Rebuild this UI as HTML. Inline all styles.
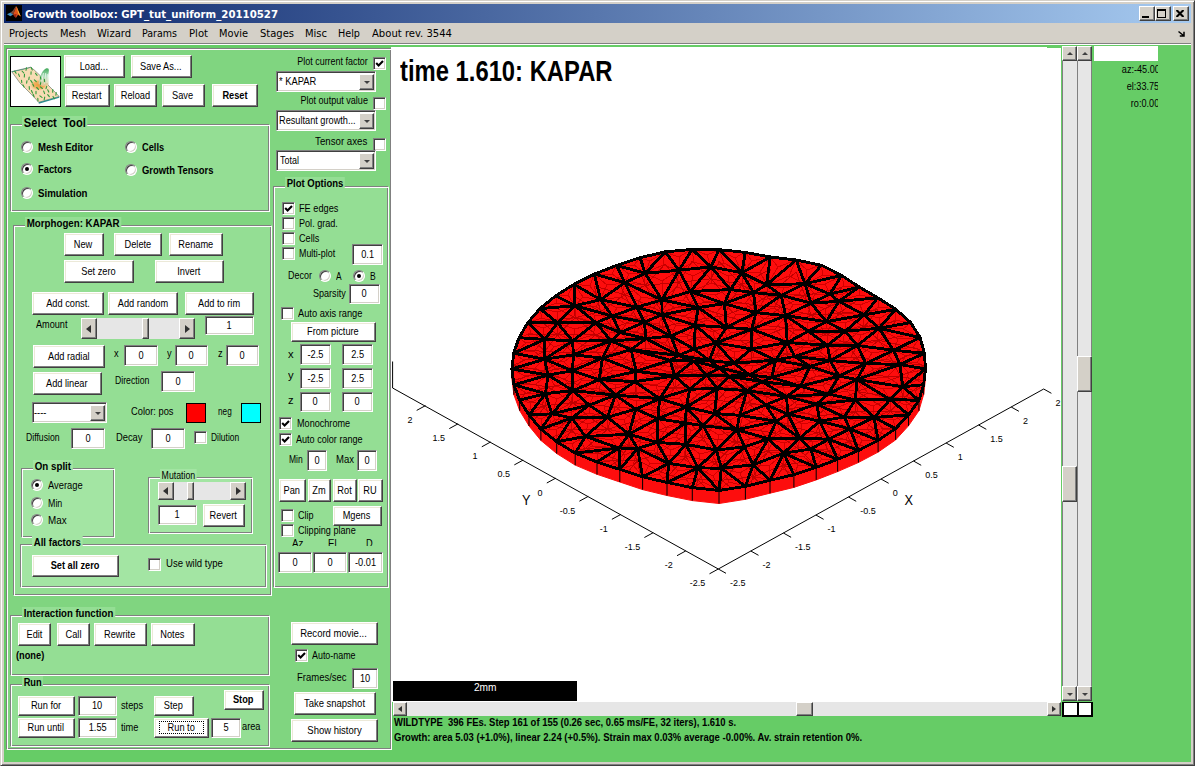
<!DOCTYPE html>
<html><head><meta charset="utf-8"><title>Growth toolbox</title>
<style>
html,body{margin:0;padding:0}
body{width:1195px;height:766px;position:relative;overflow:hidden;background:#d4d0c8;font-family:"Liberation Sans",sans-serif;font-size:11px}
body>div,body>span,body>svg{position:absolute;box-sizing:border-box}
.btn{background:#fff;border:1px solid;border-color:#fff #404040 #404040 #fff;box-shadow:inset -1px -1px 0 #808080, inset 1px 1px 0 #ece9d8}
.edit{background:#fff;border:1px solid;border-color:#808080 #fff #fff #808080;box-shadow:inset 1px 1px 0 #404040, inset -1px -1px 0 #d4d0c8}
.chk{background:#fff;border:1px solid;border-color:#808080 #fff #fff #808080;box-shadow:inset 1px 1px 0 #404040, inset -1px -1px 0 #d4d0c8}
.rad{width:12px;height:12px;border-radius:50%;background:#fff;border:1px solid;border-color:#808080 #fff #fff #808080;box-shadow:inset 1px 1px 0 #404040, inset -1px -1px 0 #d4d0c8}
.rad i{position:absolute;left:3px;top:3px;width:4px;height:4px;border-radius:50%;background:#000}
.sbtn{background:#d4d0c8;border:1px solid;border-color:#fff #404040 #404040 #fff;box-shadow:inset -1px -1px 0 #808080}
.sbtn b{position:absolute;left:50%;top:50%;width:0;height:0;border:3px solid transparent}
.sbtn b.dn{border-top:3px solid #404040;border-bottom:0;margin:-1px 0 0 -3px}
.sbtn b.up{border-bottom:3px solid #404040;border-top:0;margin:-2px 0 0 -3px}
.sbtn b.lf{border-width:4px 5px 4px 0;border-right-color:#303030;margin:-4px 0 0 -3px}
.sbtn b.rt{border-width:4px 0 4px 5px;border-left-color:#303030;margin:-4px 0 0 -2px}
.sbtn b.lf.sm{border-width:3px 4px 3px 0;margin:-3px 0 0 -2px}
.sbtn b.rt.sm{border-width:3px 0 3px 4px;margin:-3px 0 0 -2px}

</style></head><body>
<div style="left:0;top:0;width:1195px;height:766px;background:#d4d0c8;border:1px solid;border-color:#d4d0c8 #404040 #404040 #d4d0c8;box-shadow:inset 1px 1px 0 #fff, inset -1px -1px 0 #808080"></div>
<div style="left:4px;top:4px;width:1187px;height:19px;background:linear-gradient(90deg,#0a246a 0%,#a6caf0 100%)"></div>
<svg style="left:6px;top:5px" width="16" height="16" viewBox="0 0 16 16"><rect width="16" height="16" fill="#000"/>
<path d="M1 9.2 L4.600 7.6 L7.2 9.6 L4.4 11.2 Z" fill="#3f8fc0"/><path d="M4.600 7.600 L7 5.500 L9.6 1.500 L10.5 1.200 L8.5 6 L7.2 9.600 Z" fill="#7a4a3a"/><path d="M10.5 1.200 L11.8 4.500 L14.8 11.500 L12 9.800 L10 12.800 L8.600 11.500 L7.2 9.600 L8.500 6 Z" fill="#e0521a"/><path d="M10.5 1.200 L11.800 4.500 L14.800 11.500 L12.200 8.500 Z" fill="#f6b93a"/><path d="M7.2 9.600 L8.600 11.500 L10 12.800 L10.600 9 Z" fill="#9c2618"/></svg>
<span style="left:25.00px;top:6.80px;line-height:15px;font:bold 11px 'DejaVu Sans Condensed','DejaVu Sans',sans-serif;line-height:15px;transform:scaleX(1.0288);transform-origin:0 50%;color:#fff;white-space:pre">Growth toolbox: GPT_tut_uniform_20110527</span>
<div class="sbtn" style="left:1139px;top:6px;width:16px;height:15px"></div>
<div class="sbtn" style="left:1155px;top:6px;width:16px;height:15px"></div>
<div class="sbtn" style="left:1173px;top:6px;width:16px;height:15px"></div>
<div style="left:1142px;top:16px;width:7px;height:2px;background:#000"></div>
<div style="left:1157px;top:9px;width:9px;height:9px;border:1px solid #000;border-top-width:2px"></div>
<svg style="left:1176px;top:9.5px" width="8" height="7" viewBox="0 0 8 7"><path d="M0.500 0 L7.500 7 M7.500 0 L0.500 7" stroke="#000" stroke-width="2.1"/></svg>
<span style="left:9.00px;top:25.80px;line-height:15px;font:11px 'DejaVu Sans Condensed','DejaVu Sans',sans-serif;line-height:15px;transform:scaleX(1.0008);transform-origin:0 50%;color:#000;white-space:pre">Projects</span>
<span style="left:60.00px;top:25.80px;line-height:15px;font:11px 'DejaVu Sans Condensed','DejaVu Sans',sans-serif;line-height:15px;transform:scaleX(0.9976);transform-origin:0 50%;color:#000;white-space:pre">Mesh</span>
<span style="left:97.00px;top:25.80px;line-height:15px;font:11px 'DejaVu Sans Condensed','DejaVu Sans',sans-serif;line-height:15px;transform:scaleX(1.0083);transform-origin:0 50%;color:#000;white-space:pre">Wizard</span>
<span style="left:142.00px;top:25.80px;line-height:15px;font:11px 'DejaVu Sans Condensed','DejaVu Sans',sans-serif;line-height:15px;transform:scaleX(0.9597);transform-origin:0 50%;color:#000;white-space:pre">Params</span>
<span style="left:189.00px;top:25.80px;line-height:15px;font:11px 'DejaVu Sans Condensed','DejaVu Sans',sans-serif;line-height:15px;transform:scaleX(1.0184);transform-origin:0 50%;color:#000;white-space:pre">Plot</span>
<span style="left:219.00px;top:25.80px;line-height:15px;font:11px 'DejaVu Sans Condensed','DejaVu Sans',sans-serif;line-height:15px;transform:scaleX(0.9899);transform-origin:0 50%;color:#000;white-space:pre">Movie</span>
<span style="left:260.00px;top:25.80px;line-height:15px;font:11px 'DejaVu Sans Condensed','DejaVu Sans',sans-serif;line-height:15px;transform:scaleX(1.0069);transform-origin:0 50%;color:#000;white-space:pre">Stages</span>
<span style="left:305.00px;top:25.80px;line-height:15px;font:11px 'DejaVu Sans Condensed','DejaVu Sans',sans-serif;line-height:15px;transform:scaleX(1.0050);transform-origin:0 50%;color:#000;white-space:pre">Misc</span>
<span style="left:338.00px;top:25.80px;line-height:15px;font:11px 'DejaVu Sans Condensed','DejaVu Sans',sans-serif;line-height:15px;transform:scaleX(0.9744);transform-origin:0 50%;color:#000;white-space:pre">Help</span>
<span style="left:372.00px;top:25.80px;line-height:15px;font:11px 'DejaVu Sans Condensed','DejaVu Sans',sans-serif;line-height:15px;transform:scaleX(1.0155);transform-origin:0 50%;color:#000;white-space:pre">About rev. 3544</span>
<svg style="left:1177px;top:29px" width="9" height="9" viewBox="0 0 9 9"><path d="M1.500 2.500 L6.500 6.500 M7 2.800 V7 H2.800" stroke="#000" stroke-width="1.5" fill="none"/></svg>
<div style="left:4px;top:43px;width:1187px;height:1px;background:#808080"></div>
<div style="left:4px;top:44px;width:1187px;height:1px;background:#fff"></div>
<div style="left:4px;top:45px;width:1187px;height:717px;background:#66cc66"></div>
<div style="left:6px;top:48px;width:386px;height:702px;background:#80d580"></div>
<div style="left:6px;top:48px;width:385px;height:701px;border:1px solid #808080"></div>
<div style="left:7px;top:49px;width:385px;height:701px;border:1px solid #fff"></div>
<svg style="left:10px;top:56px" width="51" height="51" viewBox="0 0 51 51"><rect x="0.5" y="0.5" width="50" height="50" fill="#fff" stroke="#000"/>
<defs><radialGradient id="og"><stop offset="0" stop-color="#ee9a3a"/><stop offset="0.6" stop-color="#f0a850" stop-opacity="0.8"/><stop offset="1" stop-color="#f4c890" stop-opacity="0"/></radialGradient>
<linearGradient id="pg" x1="0" y1="0" x2="0" y2="1"><stop offset="0" stop-color="#3fa858"/><stop offset="0.45" stop-color="#a8dcb8"/><stop offset="1" stop-color="#e8c898"/></linearGradient></defs>
<path d="M1.7 15.600 L20.700 11.200 C26 15 29 19 33 22 L38 29 C42 33 46 37 49.200 40.500 L28.700 46.300 C25 42 22 39 19 36 C16 33 13 30 10 27 Z" fill="#f7dcb4" stroke="#5a6a5a" stroke-width="0.6"/>
<path d="M28.700 46.300 L49.200 40.500 L49.300 41.800 L28.800 47.700 Z" fill="#2a8c8c"/>
<path d="M1.7 15.600 L20.700 11.200 L20.800 11.800 L2 16.300 Z" fill="#3a8a7a"/>
<ellipse cx="29" cy="29" rx="9.500" ry="6" fill="url(#og)"/>
<path d="M28.500 28 C29.500 20 32.500 13.500 36.500 12.200 C39.800 11.600 39 15 38.200 19 L38.500 28.500 C35 30.500 31 30.200 28.500 28 Z" fill="url(#pg)"/>
<path d="M31.500 27 L33.500 17 M34.500 27.500 L35.700 17 M37 27 L37.300 18" stroke="#fff" stroke-width="0.9" opacity="0.75" fill="none"/>
<path d="M12.9 28.8L14.1 31.1M19.2 30.6L19.4 33.2M14.5 18.4L14.3 21.0M29.9 39.9L32.0 41.4M26.0 35.2L26.0 37.8M36.7 30.3L36.0 32.7M16.5 11.7L16.0 14.3M34.7 41.1L34.2 43.7M8.5 18.0L9.5 20.4M30.3 20.7L30.8 23.2M24.4 23.8L26.3 25.6M21.1 15.7L21.0 18.3M11.5 24.2L11.8 26.8M22.7 28.0L23.8 30.3M30.3 30.9L32.4 32.5M26.7 31.5L28.5 33.4M21.4 34.6L22.5 36.9M30.9 26.1L30.3 28.7M33.7 35.1L34.6 37.6M19.2 21.0L18.8 23.6M12.0 15.0L13.8 17.0M25.5 17.3L27.1 19.3M37.7 38.6L39.3 40.7M20.7 24.4L22.2 26.6M42.8 33.6L42.7 36.2M43.0 40.4L44.3 42.7M4.7 15.1L6.1 17.3M34.4 23.3L34.6 25.8M23.1 38.3L24.1 40.7M17.0 24.7L16.6 27.2M27.8 42.4L28.0 44.9M46.2 36.6L45.9 39.2M21.2 11.6L22.3 14.0M37.7 33.8L38.8 36.1" stroke="#2f9a3a" stroke-width="1.1" stroke-linecap="round" fill="none"/></svg>
<div class="btn" style="left:64px;top:55px;width:61px;height:23px"></div>
<span style="left:77.18px;top:58.50px;line-height:15px;font:11px 'Liberation Sans',sans-serif;line-height:15px;transform:scaleX(0.8400);transform-origin:50% 50%;color:#000;white-space:pre">Load...</span>
<div class="btn" style="left:131px;top:55px;width:61px;height:23px"></div>
<span style="left:136.23px;top:58.50px;line-height:15px;font:11px 'Liberation Sans',sans-serif;line-height:15px;transform:scaleX(0.8400);transform-origin:50% 50%;color:#000;white-space:pre">Save As...</span>
<div class="btn" style="left:65px;top:84px;width:45px;height:23px"></div>
<span style="left:69.27px;top:87.50px;line-height:15px;font:11px 'Liberation Sans',sans-serif;line-height:15px;transform:scaleX(0.8400);transform-origin:50% 50%;color:#000;white-space:pre">Restart</span>
<div class="btn" style="left:114px;top:84px;width:43px;height:23px"></div>
<span style="left:117.57px;top:87.50px;line-height:15px;font:11px 'Liberation Sans',sans-serif;line-height:15px;transform:scaleX(0.8400);transform-origin:50% 50%;color:#000;white-space:pre">Reload</span>
<div class="btn" style="left:162px;top:84px;width:43px;height:23px"></div>
<span style="left:170.46px;top:87.50px;line-height:15px;font:11px 'Liberation Sans',sans-serif;line-height:15px;transform:scaleX(0.8400);transform-origin:50% 50%;color:#000;white-space:pre">Save</span>
<div class="btn" style="left:212px;top:84px;width:46px;height:23px"></div>
<span style="left:219.52px;top:87.50px;line-height:15px;font:bold 11px 'Liberation Sans',sans-serif;line-height:15px;transform:scaleX(0.8400);transform-origin:50% 50%;color:#000;white-space:pre">Reset</span>
<div style="left:10px;top:124px;width:260px;height:88px;background:#94de94"></div>
<div style="left:10px;top:124px;width:259px;height:87px;border:1px solid #808080"></div>
<div style="left:11px;top:125px;width:259px;height:87px;border:1px solid #fff"></div>
<span style="left:24.00px;top:115.50px;line-height:14px;font:bold 12px 'Liberation Sans',sans-serif;line-height:14px;transform:scaleX(0.9328);transform-origin:0 50%;color:#000;white-space:pre;background:#94de94;padding:0 2px;margin-left:-2px">Select  Tool</span>
<div class="rad" style="left:21px;top:141px"></div>
<span style="left:37.90px;top:139.50px;line-height:15px;font:bold 11px 'Liberation Sans',sans-serif;line-height:15px;transform:scaleX(0.8721);transform-origin:0 50%;color:#000;white-space:pre">Mesh Editor</span>
<div class="rad" style="left:21px;top:163px"><i></i></div>
<span style="left:37.90px;top:161.50px;line-height:15px;font:bold 11px 'Liberation Sans',sans-serif;line-height:15px;transform:scaleX(0.8503);transform-origin:0 50%;color:#000;white-space:pre">Factors</span>
<div class="rad" style="left:21px;top:187px"></div>
<span style="left:37.90px;top:185.50px;line-height:15px;font:bold 11px 'Liberation Sans',sans-serif;line-height:15px;transform:scaleX(0.8802);transform-origin:0 50%;color:#000;white-space:pre">Simulation</span>
<div class="rad" style="left:125px;top:141px"></div>
<span style="left:142.00px;top:139.50px;line-height:15px;font:bold 11px 'Liberation Sans',sans-serif;line-height:15px;transform:scaleX(0.8400);transform-origin:0 50%;color:#000;white-space:pre">Cells</span>
<div class="rad" style="left:125px;top:164px"></div>
<span style="left:142.00px;top:162.50px;line-height:15px;font:bold 11px 'Liberation Sans',sans-serif;line-height:15px;transform:scaleX(0.8560);transform-origin:0 50%;color:#000;white-space:pre">Growth Tensors</span>
<div style="left:13px;top:225px;width:259px;height:371px;background:#94de94"></div>
<div style="left:13px;top:225px;width:258px;height:370px;border:1px solid #808080"></div>
<div style="left:14px;top:226px;width:258px;height:370px;border:1px solid #fff"></div>
<span style="left:27.30px;top:216.50px;line-height:13px;font:bold 11px 'Liberation Sans',sans-serif;line-height:13px;transform:scaleX(0.8836);transform-origin:0 50%;color:#000;white-space:pre;background:#94de94;padding:0 2px;margin-left:-2px">Morphogen: KAPAR</span>
<div class="btn" style="left:64px;top:233px;width:40px;height:23px"></div>
<span style="left:72.49px;top:236.50px;line-height:15px;font:11px 'Liberation Sans',sans-serif;line-height:15px;transform:scaleX(0.8400);transform-origin:50% 50%;color:#000;white-space:pre">New</span>
<div class="btn" style="left:114px;top:233px;width:48px;height:23px"></div>
<span style="left:121.60px;top:236.50px;line-height:15px;font:11px 'Liberation Sans',sans-serif;line-height:15px;transform:scaleX(0.8400);transform-origin:50% 50%;color:#000;white-space:pre">Delete</span>
<div class="btn" style="left:169px;top:233px;width:54px;height:23px"></div>
<span style="left:174.71px;top:236.50px;line-height:15px;font:11px 'Liberation Sans',sans-serif;line-height:15px;transform:scaleX(0.8400);transform-origin:50% 50%;color:#000;white-space:pre">Rename</span>
<div class="btn" style="left:64px;top:260px;width:70px;height:23px"></div>
<span style="left:78.02px;top:263.50px;line-height:15px;font:11px 'Liberation Sans',sans-serif;line-height:15px;transform:scaleX(0.8400);transform-origin:50% 50%;color:#000;white-space:pre">Set zero</span>
<div class="btn" style="left:155px;top:260px;width:69px;height:23px"></div>
<span style="left:175.24px;top:263.50px;line-height:15px;font:11px 'Liberation Sans',sans-serif;line-height:15px;transform:scaleX(0.8400);transform-origin:50% 50%;color:#000;white-space:pre">Invert</span>
<div class="btn" style="left:32px;top:292px;width:72px;height:23px"></div>
<span style="left:41.51px;top:295.50px;line-height:15px;font:11px 'Liberation Sans',sans-serif;line-height:15px;transform:scaleX(0.8400);transform-origin:50% 50%;color:#000;white-space:pre">Add const.</span>
<div class="btn" style="left:108px;top:292px;width:70px;height:23px"></div>
<span style="left:112.53px;top:295.50px;line-height:15px;font:11px 'Liberation Sans',sans-serif;line-height:15px;transform:scaleX(0.8400);transform-origin:50% 50%;color:#000;white-space:pre">Add random</span>
<div class="btn" style="left:185px;top:292px;width:69px;height:23px"></div>
<span style="left:193.93px;top:295.50px;line-height:15px;font:11px 'Liberation Sans',sans-serif;line-height:15px;transform:scaleX(0.8400);transform-origin:50% 50%;color:#000;white-space:pre">Add to rim</span>
<span style="left:36.00px;top:317.00px;line-height:15px;font:11px 'Liberation Sans',sans-serif;line-height:15px;transform:scaleX(0.8307);transform-origin:0 50%;color:#000;white-space:pre">Amount</span>
<div style="left:81px;top:318px;width:114px;height:21px;background:#e6e6e6"></div>
<div class="sbtn" style="left:81px;top:318px;width:16px;height:21px"><b class="lf"></b></div>
<div class="sbtn" style="left:179px;top:318px;width:16px;height:21px"><b class="rt"></b></div>
<div class="sbtn" style="left:142px;top:318px;width:7px;height:21px"></div>
<div class="edit" style="left:205px;top:316px;width:49px;height:19px"></div>
<span style="left:226.44px;top:317.70px;line-height:15px;font:11px 'Liberation Sans',sans-serif;line-height:15px;transform:scaleX(0.8400);transform-origin:50% 50%;color:#000;white-space:pre">1</span>
<div class="btn" style="left:33px;top:345px;width:72px;height:23px"></div>
<span style="left:43.73px;top:348.50px;line-height:15px;font:11px 'Liberation Sans',sans-serif;line-height:15px;transform:scaleX(0.8400);transform-origin:50% 50%;color:#000;white-space:pre">Add radial</span>
<span style="left:114.00px;top:346.00px;line-height:15px;font:11px 'Liberation Sans',sans-serif;line-height:15px;transform:scaleX(0.8400);transform-origin:0 50%;color:#000;white-space:pre">x</span>
<div class="edit" style="left:124px;top:345px;width:34px;height:21px"></div>
<span style="left:137.94px;top:347.70px;line-height:15px;font:11px 'Liberation Sans',sans-serif;line-height:15px;transform:scaleX(0.8400);transform-origin:50% 50%;color:#000;white-space:pre">0</span>
<span style="left:166.50px;top:346.00px;line-height:15px;font:11px 'Liberation Sans',sans-serif;line-height:15px;transform:scaleX(0.8400);transform-origin:0 50%;color:#000;white-space:pre">y</span>
<div class="edit" style="left:175px;top:345px;width:33px;height:21px"></div>
<span style="left:188.44px;top:347.70px;line-height:15px;font:11px 'Liberation Sans',sans-serif;line-height:15px;transform:scaleX(0.8400);transform-origin:50% 50%;color:#000;white-space:pre">0</span>
<span style="left:217.50px;top:346.00px;line-height:15px;font:11px 'Liberation Sans',sans-serif;line-height:15px;transform:scaleX(0.8400);transform-origin:0 50%;color:#000;white-space:pre">z</span>
<div class="edit" style="left:226px;top:345px;width:33px;height:21px"></div>
<span style="left:239.44px;top:347.70px;line-height:15px;font:11px 'Liberation Sans',sans-serif;line-height:15px;transform:scaleX(0.8400);transform-origin:50% 50%;color:#000;white-space:pre">0</span>
<div class="btn" style="left:33px;top:372px;width:69px;height:23px"></div>
<span style="left:42.23px;top:375.50px;line-height:15px;font:11px 'Liberation Sans',sans-serif;line-height:15px;transform:scaleX(0.8400);transform-origin:50% 50%;color:#000;white-space:pre">Add linear</span>
<span style="left:115.00px;top:373.00px;line-height:15px;font:11px 'Liberation Sans',sans-serif;line-height:15px;transform:scaleX(0.7902);transform-origin:0 50%;color:#000;white-space:pre">Direction</span>
<div class="edit" style="left:161px;top:371px;width:34px;height:21px"></div>
<span style="left:174.94px;top:373.70px;line-height:15px;font:11px 'Liberation Sans',sans-serif;line-height:15px;transform:scaleX(0.8400);transform-origin:50% 50%;color:#000;white-space:pre">0</span>
<div class="edit" style="left:32px;top:402px;width:75px;height:21px"></div>
<div class="sbtn" style="left:90px;top:405px;width:15px;height:16px"><b class="dn"></b></div>
<span style="left:34.00px;top:405.00px;line-height:15px;font:11px 'Liberation Sans',sans-serif;line-height:15px;transform:scaleX(0.8400);transform-origin:0 50%;color:#000;white-space:pre">----</span>
<span style="left:131.20px;top:404.00px;line-height:15px;font:11px 'Liberation Sans',sans-serif;line-height:15px;transform:scaleX(0.8476);transform-origin:0 50%;color:#000;white-space:pre">Color: pos</span>
<div style="left:186px;top:403px;width:20px;height:20px;background:#ff0000;border:1px solid #000"></div>
<span style="left:218.30px;top:404.00px;line-height:15px;font:11px 'Liberation Sans',sans-serif;line-height:15px;transform:scaleX(0.7462);transform-origin:0 50%;color:#000;white-space:pre">neg</span>
<div style="left:241px;top:403px;width:20px;height:20px;background:#00ffff;border:1px solid #000"></div>
<span style="left:25.80px;top:429.50px;line-height:15px;font:11px 'Liberation Sans',sans-serif;line-height:15px;transform:scaleX(0.7886);transform-origin:0 50%;color:#000;white-space:pre">Diffusion</span>
<div class="edit" style="left:71px;top:428px;width:34px;height:21px"></div>
<span style="left:84.94px;top:430.70px;line-height:15px;font:11px 'Liberation Sans',sans-serif;line-height:15px;transform:scaleX(0.8400);transform-origin:50% 50%;color:#000;white-space:pre">0</span>
<span style="left:115.70px;top:429.50px;line-height:15px;font:11px 'Liberation Sans',sans-serif;line-height:15px;transform:scaleX(0.8497);transform-origin:0 50%;color:#000;white-space:pre">Decay</span>
<div class="edit" style="left:151px;top:428px;width:34px;height:21px"></div>
<span style="left:164.94px;top:430.70px;line-height:15px;font:11px 'Liberation Sans',sans-serif;line-height:15px;transform:scaleX(0.8400);transform-origin:50% 50%;color:#000;white-space:pre">0</span>
<div class="chk" style="left:194px;top:431px;width:13px;height:13px"></div>
<span style="left:211.00px;top:429.50px;line-height:15px;font:11px 'Liberation Sans',sans-serif;line-height:15px;transform:scaleX(0.7687);transform-origin:0 50%;color:#000;white-space:pre">Dilution</span>
<div style="left:21px;top:468px;width:94px;height:70px;background:#a3e5a3"></div>
<div style="left:21px;top:468px;width:93px;height:69px;border:1px solid #808080"></div>
<div style="left:22px;top:469px;width:93px;height:69px;border:1px solid #fff"></div>
<span style="left:35.00px;top:460.00px;line-height:13px;font:bold 11px 'Liberation Sans',sans-serif;line-height:13px;transform:scaleX(0.8864);transform-origin:0 50%;color:#000;white-space:pre;background:#a3e5a3;padding:0 2px;margin-left:-2px">On split</span>
<div class="rad" style="left:31px;top:479px"><i></i></div>
<span style="left:48.00px;top:477.50px;line-height:15px;font:11px 'Liberation Sans',sans-serif;line-height:15px;transform:scaleX(0.8509);transform-origin:0 50%;color:#000;white-space:pre">Average</span>
<div class="rad" style="left:31px;top:497px"></div>
<span style="left:48.00px;top:495.50px;line-height:15px;font:11px 'Liberation Sans',sans-serif;line-height:15px;transform:scaleX(0.8063);transform-origin:0 50%;color:#000;white-space:pre">Min</span>
<div class="rad" style="left:31px;top:514px"></div>
<span style="left:48.00px;top:512.50px;line-height:15px;font:11px 'Liberation Sans',sans-serif;line-height:15px;transform:scaleX(0.8950);transform-origin:0 50%;color:#000;white-space:pre">Max</span>
<div style="left:148px;top:477px;width:105px;height:57px;background:#a3e5a3"></div>
<div style="left:148px;top:477px;width:104px;height:56px;border:1px solid #808080"></div>
<div style="left:149px;top:478px;width:104px;height:56px;border:1px solid #fff"></div>
<span style="left:162.30px;top:468.50px;line-height:13px;font:11px 'Liberation Sans',sans-serif;line-height:13px;transform:scaleX(0.7961);transform-origin:0 50%;color:#000;white-space:pre;background:#a3e5a3;padding:0 2px;margin-left:-2px">Mutation</span>
<div style="left:158px;top:482px;width:88px;height:18px;background:#e6e6e6"></div>
<div class="sbtn" style="left:158px;top:482px;width:16px;height:18px"><b class="lf"></b></div>
<div class="sbtn" style="left:230px;top:482px;width:16px;height:18px"><b class="rt"></b></div>
<div class="sbtn" style="left:187px;top:482px;width:7px;height:18px"></div>
<div class="edit" style="left:158px;top:505px;width:39px;height:20px"></div>
<span style="left:174.44px;top:507.20px;line-height:15px;font:11px 'Liberation Sans',sans-serif;line-height:15px;transform:scaleX(0.8400);transform-origin:50% 50%;color:#000;white-space:pre">1</span>
<div class="btn" style="left:203px;top:504px;width:42px;height:23px"></div>
<span style="left:207.30px;top:507.50px;line-height:15px;font:11px 'Liberation Sans',sans-serif;line-height:15px;transform:scaleX(0.8400);transform-origin:50% 50%;color:#000;white-space:pre">Revert</span>
<div style="left:20px;top:544px;width:247px;height:44px;background:#a3e5a3"></div>
<div style="left:20px;top:544px;width:246px;height:43px;border:1px solid #808080"></div>
<div style="left:21px;top:545px;width:246px;height:43px;border:1px solid #fff"></div>
<span style="left:34.00px;top:536.00px;line-height:13px;font:bold 11px 'Liberation Sans',sans-serif;line-height:13px;transform:scaleX(0.8737);transform-origin:0 50%;color:#000;white-space:pre;background:#a3e5a3;padding:0 2px;margin-left:-2px">All factors</span>
<div class="btn" style="left:32px;top:555px;width:87px;height:22px"></div>
<span style="left:45.96px;top:558.00px;line-height:15px;font:bold 11px 'Liberation Sans',sans-serif;line-height:15px;transform:scaleX(0.8400);transform-origin:50% 50%;color:#000;white-space:pre">Set all zero</span>
<div class="chk" style="left:148px;top:558px;width:13px;height:13px"></div>
<span style="left:165.70px;top:556.00px;line-height:15px;font:11px 'Liberation Sans',sans-serif;line-height:15px;transform:scaleX(0.8697);transform-origin:0 50%;color:#000;white-space:pre">Use wild type</span>
<div style="left:10px;top:615px;width:260px;height:61px;background:#94de94"></div>
<div style="left:10px;top:615px;width:259px;height:60px;border:1px solid #808080"></div>
<div style="left:11px;top:616px;width:259px;height:60px;border:1px solid #fff"></div>
<span style="left:24.00px;top:607.00px;line-height:13px;font:bold 11px 'Liberation Sans',sans-serif;line-height:13px;transform:scaleX(0.8717);transform-origin:0 50%;color:#000;white-space:pre;background:#94de94;padding:0 2px;margin-left:-2px">Interaction function</span>
<div class="btn" style="left:18px;top:623px;width:33px;height:23px"></div>
<span style="left:24.52px;top:626.50px;line-height:15px;font:11px 'Liberation Sans',sans-serif;line-height:15px;transform:scaleX(0.8400);transform-origin:50% 50%;color:#000;white-space:pre">Edit</span>
<div class="btn" style="left:57px;top:623px;width:33px;height:23px"></div>
<span style="left:63.52px;top:626.50px;line-height:15px;font:11px 'Liberation Sans',sans-serif;line-height:15px;transform:scaleX(0.8400);transform-origin:50% 50%;color:#000;white-space:pre">Call</span>
<div class="btn" style="left:94px;top:623px;width:53px;height:23px"></div>
<span style="left:101.35px;top:626.50px;line-height:15px;font:11px 'Liberation Sans',sans-serif;line-height:15px;transform:scaleX(0.8400);transform-origin:50% 50%;color:#000;white-space:pre">Rewrite</span>
<div class="btn" style="left:151px;top:623px;width:44px;height:23px"></div>
<span style="left:158.12px;top:626.50px;line-height:15px;font:11px 'Liberation Sans',sans-serif;line-height:15px;transform:scaleX(0.8400);transform-origin:50% 50%;color:#000;white-space:pre">Notes</span>
<span style="left:16.00px;top:648.00px;line-height:15px;font:bold 11px 'Liberation Sans',sans-serif;line-height:15px;transform:scaleX(0.8400);transform-origin:0 50%;color:#000;white-space:pre">(none)</span>
<div style="left:10px;top:684px;width:260px;height:63px;background:#94de94"></div>
<div style="left:10px;top:684px;width:259px;height:62px;border:1px solid #808080"></div>
<div style="left:11px;top:685px;width:259px;height:62px;border:1px solid #fff"></div>
<span style="left:23.50px;top:676.00px;line-height:13px;font:bold 11px 'Liberation Sans',sans-serif;line-height:13px;transform:scaleX(0.8415);transform-origin:0 50%;color:#000;white-space:pre;background:#94de94;padding:0 2px;margin-left:-2px">Run</span>
<div class="btn" style="left:18px;top:696px;width:57px;height:20px"></div>
<span style="left:27.96px;top:698.00px;line-height:15px;font:11px 'Liberation Sans',sans-serif;line-height:15px;transform:scaleX(0.8400);transform-origin:50% 50%;color:#000;white-space:pre">Run for</span>
<div class="edit" style="left:78px;top:696px;width:39px;height:20px"></div>
<span style="left:91.38px;top:698.20px;line-height:15px;font:11px 'Liberation Sans',sans-serif;line-height:15px;transform:scaleX(0.8400);transform-origin:50% 50%;color:#000;white-space:pre">10</span>
<span style="left:121.00px;top:698.00px;line-height:15px;font:11px 'Liberation Sans',sans-serif;line-height:15px;transform:scaleX(0.8400);transform-origin:0 50%;color:#000;white-space:pre">steps</span>
<div class="btn" style="left:154px;top:696px;width:40px;height:20px"></div>
<span style="left:162.18px;top:698.00px;line-height:15px;font:11px 'Liberation Sans',sans-serif;line-height:15px;transform:scaleX(0.8400);transform-origin:50% 50%;color:#000;white-space:pre">Step</span>
<div class="btn" style="left:224px;top:690px;width:40px;height:20px"></div>
<span style="left:231.27px;top:692.00px;line-height:15px;font:bold 11px 'Liberation Sans',sans-serif;line-height:15px;transform:scaleX(0.8400);transform-origin:50% 50%;color:#000;white-space:pre">Stop</span>
<div class="btn" style="left:18px;top:718px;width:57px;height:20px"></div>
<span style="left:24.29px;top:720.00px;line-height:15px;font:11px 'Liberation Sans',sans-serif;line-height:15px;transform:scaleX(0.8400);transform-origin:50% 50%;color:#000;white-space:pre">Run until</span>
<div class="edit" style="left:78px;top:718px;width:39px;height:20px"></div>
<span style="left:86.79px;top:720.20px;line-height:15px;font:11px 'Liberation Sans',sans-serif;line-height:15px;transform:scaleX(0.8400);transform-origin:50% 50%;color:#000;white-space:pre">1.55</span>
<span style="left:121.00px;top:720.00px;line-height:15px;font:11px 'Liberation Sans',sans-serif;line-height:15px;transform:scaleX(0.8400);transform-origin:0 50%;color:#000;white-space:pre">time</span>
<div class="btn" style="left:154px;top:718px;width:55px;height:20px"></div>
<div style="left:159px;top:721px;width:45px;height:13px;border:1px dotted #000"></div>
<span style="left:164.79px;top:720.00px;line-height:15px;font:11px 'Liberation Sans',sans-serif;line-height:15px;transform:scaleX(0.8400);transform-origin:50% 50%;color:#000;white-space:pre">Run to</span>
<div class="edit" style="left:211px;top:718px;width:30px;height:20px"></div>
<span style="left:222.94px;top:720.20px;line-height:15px;font:11px 'Liberation Sans',sans-serif;line-height:15px;transform:scaleX(0.8400);transform-origin:50% 50%;color:#000;white-space:pre">5</span>
<span style="left:242.00px;top:718.50px;line-height:15px;font:11px 'Liberation Sans',sans-serif;line-height:15px;transform:scaleX(0.8400);transform-origin:0 50%;color:#000;white-space:pre">area</span>
<span style="left:280.87px;top:53.60px;line-height:15px;font:11px 'Liberation Sans',sans-serif;line-height:15px;transform:scaleX(0.8119);transform-origin:100% 50%;color:#000;white-space:pre">Plot current factor</span>
<div class="chk" style="left:373px;top:57px;width:13px;height:13px"><svg width="13" height="13" viewBox="0 0 13 13" style="position:absolute;left:-1px;top:-1px"><path d="M3.2 6 L5.6 8.4 L10 4" stroke="#000" stroke-width="2.1" fill="none"/></svg></div>
<div class="edit" style="left:276px;top:71px;width:100px;height:21px"></div>
<div class="sbtn" style="left:359px;top:74px;width:15px;height:16px"><b class="dn"></b></div>
<span style="left:279.40px;top:73.60px;line-height:15px;font:11px 'Liberation Sans',sans-serif;line-height:15px;transform:scaleX(0.8491);transform-origin:0 50%;color:#000;white-space:pre">* KAPAR</span>
<span style="left:285.75px;top:93.00px;line-height:15px;font:11px 'Liberation Sans',sans-serif;line-height:15px;transform:scaleX(0.8236);transform-origin:100% 50%;color:#000;white-space:pre">Plot output value</span>
<div class="chk" style="left:373px;top:97px;width:13px;height:13px"></div>
<div class="edit" style="left:276px;top:110px;width:100px;height:21px"></div>
<div class="sbtn" style="left:359px;top:113px;width:15px;height:16px"><b class="dn"></b></div>
<span style="left:279.40px;top:113.00px;line-height:15px;font:11px 'Liberation Sans',sans-serif;line-height:15px;transform:scaleX(0.8352);transform-origin:0 50%;color:#000;white-space:pre">Resultant growth...</span>
<span style="left:308.39px;top:133.60px;line-height:15px;font:11px 'Liberation Sans',sans-serif;line-height:15px;transform:scaleX(0.8801);transform-origin:100% 50%;color:#000;white-space:pre">Tensor axes</span>
<div class="chk" style="left:373px;top:138px;width:13px;height:13px"></div>
<div class="edit" style="left:276px;top:150px;width:100px;height:21px"></div>
<div class="sbtn" style="left:359px;top:153px;width:15px;height:16px"><b class="dn"></b></div>
<span style="left:280.00px;top:152.70px;line-height:15px;font:11px 'Liberation Sans',sans-serif;line-height:15px;transform:scaleX(0.8172);transform-origin:0 50%;color:#000;white-space:pre">Total</span>
<div style="left:273px;top:186px;width:116px;height:402px;background:#94de94"></div>
<div style="left:273px;top:186px;width:115px;height:401px;border:1px solid #808080"></div>
<div style="left:274px;top:187px;width:115px;height:401px;border:1px solid #fff"></div>
<span style="left:287.20px;top:176.50px;line-height:13px;font:bold 11px 'Liberation Sans',sans-serif;line-height:13px;transform:scaleX(0.8656);transform-origin:0 50%;color:#000;white-space:pre;background:#94de94;padding:0 2px;margin-left:-2px">Plot Options</span>
<div class="chk" style="left:282px;top:202px;width:13px;height:13px"><svg width="13" height="13" viewBox="0 0 13 13" style="position:absolute;left:-1px;top:-1px"><path d="M3.2 6 L5.6 8.4 L10 4" stroke="#000" stroke-width="2.1" fill="none"/></svg></div>
<span style="left:299.40px;top:200.80px;line-height:15px;font:11px 'Liberation Sans',sans-serif;line-height:15px;transform:scaleX(0.8366);transform-origin:0 50%;color:#000;white-space:pre">FE edges</span>
<div class="chk" style="left:282px;top:217px;width:13px;height:13px"></div>
<span style="left:299.40px;top:215.80px;line-height:15px;font:11px 'Liberation Sans',sans-serif;line-height:15px;transform:scaleX(0.8260);transform-origin:0 50%;color:#000;white-space:pre">Pol. grad.</span>
<div class="chk" style="left:282px;top:232px;width:13px;height:13px"></div>
<span style="left:299.40px;top:230.80px;line-height:15px;font:11px 'Liberation Sans',sans-serif;line-height:15px;transform:scaleX(0.8302);transform-origin:0 50%;color:#000;white-space:pre">Cells</span>
<div class="chk" style="left:282px;top:247px;width:13px;height:13px"></div>
<span style="left:299.40px;top:245.80px;line-height:15px;font:11px 'Liberation Sans',sans-serif;line-height:15px;transform:scaleX(0.8090);transform-origin:0 50%;color:#000;white-space:pre">Multi-plot</span>
<div class="edit" style="left:352px;top:244px;width:31px;height:21px"></div>
<span style="left:359.85px;top:246.70px;line-height:15px;font:11px 'Liberation Sans',sans-serif;line-height:15px;transform:scaleX(0.8400);transform-origin:50% 50%;color:#000;white-space:pre">0.1</span>
<span style="left:288.30px;top:268.00px;line-height:15px;font:11px 'Liberation Sans',sans-serif;line-height:15px;transform:scaleX(0.8145);transform-origin:0 50%;color:#000;white-space:pre">Decor</span>
<div class="rad" style="left:319.2px;top:269.8px"></div>
<span style="left:336.00px;top:268.50px;line-height:15px;font:11px 'Liberation Sans',sans-serif;line-height:15px;transform:scaleX(0.7626);transform-origin:0 50%;color:#000;white-space:pre">A</span>
<div class="rad" style="left:353.1px;top:269.8px"><i></i></div>
<span style="left:370.00px;top:268.50px;line-height:15px;font:11px 'Liberation Sans',sans-serif;line-height:15px;transform:scaleX(0.7762);transform-origin:0 50%;color:#000;white-space:pre">B</span>
<span style="left:313.30px;top:285.80px;line-height:15px;font:11px 'Liberation Sans',sans-serif;line-height:15px;transform:scaleX(0.8226);transform-origin:0 50%;color:#000;white-space:pre">Sparsity</span>
<div class="edit" style="left:349px;top:284px;width:31px;height:20px"></div>
<span style="left:361.44px;top:286.20px;line-height:15px;font:11px 'Liberation Sans',sans-serif;line-height:15px;transform:scaleX(0.8400);transform-origin:50% 50%;color:#000;white-space:pre">0</span>
<div class="chk" style="left:281px;top:307px;width:13px;height:13px"></div>
<span style="left:298.30px;top:305.80px;line-height:15px;font:11px 'Liberation Sans',sans-serif;line-height:15px;transform:scaleX(0.8425);transform-origin:0 50%;color:#000;white-space:pre">Auto axis range</span>
<div class="btn" style="left:291px;top:322px;width:85px;height:20px"></div>
<span style="left:302.12px;top:324.00px;line-height:15px;font:11px 'Liberation Sans',sans-serif;line-height:15px;transform:scaleX(0.8356);transform-origin:50% 50%;color:#000;white-space:pre">From picture</span>
<span style="left:288.30px;top:346.70px;line-height:15px;font:11px 'Liberation Sans',sans-serif;line-height:15px;transform:scaleX(1.0182);transform-origin:0 50%;color:#000;white-space:pre">x</span>
<div class="edit" style="left:300px;top:344px;width:31px;height:21px"></div>
<span style="left:306.02px;top:346.70px;line-height:15px;font:11px 'Liberation Sans',sans-serif;line-height:15px;transform:scaleX(0.8400);transform-origin:50% 50%;color:#000;white-space:pre">-2.5</span>
<div class="edit" style="left:342px;top:344px;width:31px;height:21px"></div>
<span style="left:349.85px;top:346.70px;line-height:15px;font:11px 'Liberation Sans',sans-serif;line-height:15px;transform:scaleX(0.8400);transform-origin:50% 50%;color:#000;white-space:pre">2.5</span>
<span style="left:288.30px;top:368.20px;line-height:15px;font:11px 'Liberation Sans',sans-serif;line-height:15px;transform:scaleX(1.0182);transform-origin:0 50%;color:#000;white-space:pre">y</span>
<div class="edit" style="left:300px;top:368px;width:31px;height:21px"></div>
<span style="left:306.02px;top:370.70px;line-height:15px;font:11px 'Liberation Sans',sans-serif;line-height:15px;transform:scaleX(0.8400);transform-origin:50% 50%;color:#000;white-space:pre">-2.5</span>
<div class="edit" style="left:342px;top:368px;width:31px;height:21px"></div>
<span style="left:349.85px;top:370.70px;line-height:15px;font:11px 'Liberation Sans',sans-serif;line-height:15px;transform:scaleX(0.8400);transform-origin:50% 50%;color:#000;white-space:pre">2.5</span>
<span style="left:288.30px;top:392.50px;line-height:15px;font:11px 'Liberation Sans',sans-serif;line-height:15px;transform:scaleX(1.0182);transform-origin:0 50%;color:#000;white-space:pre">z</span>
<div class="edit" style="left:300px;top:392px;width:31px;height:20px"></div>
<span style="left:312.44px;top:394.20px;line-height:15px;font:11px 'Liberation Sans',sans-serif;line-height:15px;transform:scaleX(0.8400);transform-origin:50% 50%;color:#000;white-space:pre">0</span>
<div class="edit" style="left:342px;top:392px;width:31px;height:20px"></div>
<span style="left:354.44px;top:394.20px;line-height:15px;font:11px 'Liberation Sans',sans-serif;line-height:15px;transform:scaleX(0.8400);transform-origin:50% 50%;color:#000;white-space:pre">0</span>
<div class="chk" style="left:279px;top:417px;width:13px;height:13px"><svg width="13" height="13" viewBox="0 0 13 13" style="position:absolute;left:-1px;top:-1px"><path d="M3.2 6 L5.6 8.4 L10 4" stroke="#000" stroke-width="2.1" fill="none"/></svg></div>
<span style="left:296.60px;top:415.60px;line-height:15px;font:11px 'Liberation Sans',sans-serif;line-height:15px;transform:scaleX(0.8271);transform-origin:0 50%;color:#000;white-space:pre">Monochrome</span>
<div class="chk" style="left:279px;top:433px;width:13px;height:13px"><svg width="13" height="13" viewBox="0 0 13 13" style="position:absolute;left:-1px;top:-1px"><path d="M3.2 6 L5.6 8.4 L10 4" stroke="#000" stroke-width="2.1" fill="none"/></svg></div>
<span style="left:296.10px;top:431.60px;line-height:15px;font:11px 'Liberation Sans',sans-serif;line-height:15px;transform:scaleX(0.8251);transform-origin:0 50%;color:#000;white-space:pre">Auto color range</span>
<span style="left:289.40px;top:451.90px;line-height:15px;font:11px 'Liberation Sans',sans-serif;line-height:15px;transform:scaleX(0.7725);transform-origin:0 50%;color:#000;white-space:pre">Min</span>
<div class="edit" style="left:307px;top:450px;width:20px;height:21px"></div>
<span style="left:313.94px;top:452.70px;line-height:15px;font:11px 'Liberation Sans',sans-serif;line-height:15px;transform:scaleX(0.8400);transform-origin:50% 50%;color:#000;white-space:pre">0</span>
<span style="left:335.50px;top:451.90px;line-height:15px;font:11px 'Liberation Sans',sans-serif;line-height:15px;transform:scaleX(0.8662);transform-origin:0 50%;color:#000;white-space:pre">Max</span>
<div class="edit" style="left:357px;top:450px;width:20px;height:21px"></div>
<span style="left:363.94px;top:452.70px;line-height:15px;font:11px 'Liberation Sans',sans-serif;line-height:15px;transform:scaleX(0.8400);transform-origin:50% 50%;color:#000;white-space:pre">0</span>
<div class="btn" style="left:279px;top:479px;width:27px;height:23px"></div>
<span style="left:282.21px;top:482.50px;line-height:15px;font:11px 'Liberation Sans',sans-serif;line-height:15px;transform:scaleX(0.8400);transform-origin:50% 50%;color:#000;white-space:pre">Pan</span>
<div class="btn" style="left:308px;top:479px;width:23px;height:23px"></div>
<span style="left:311.05px;top:482.50px;line-height:15px;font:11px 'Liberation Sans',sans-serif;line-height:15px;transform:scaleX(0.8400);transform-origin:50% 50%;color:#000;white-space:pre">Zm</span>
<div class="btn" style="left:333px;top:479px;width:24px;height:23px"></div>
<span style="left:335.94px;top:482.50px;line-height:15px;font:11px 'Liberation Sans',sans-serif;line-height:15px;transform:scaleX(0.8400);transform-origin:50% 50%;color:#000;white-space:pre">Rot</span>
<div class="btn" style="left:358px;top:479px;width:25px;height:23px"></div>
<span style="left:362.05px;top:482.50px;line-height:15px;font:11px 'Liberation Sans',sans-serif;line-height:15px;transform:scaleX(0.8400);transform-origin:50% 50%;color:#000;white-space:pre">RU</span>
<div class="chk" style="left:281px;top:509px;width:13px;height:13px"></div>
<span style="left:298.30px;top:507.70px;line-height:15px;font:11px 'Liberation Sans',sans-serif;line-height:15px;transform:scaleX(0.8231);transform-origin:0 50%;color:#000;white-space:pre">Clip</span>
<div class="btn" style="left:333px;top:506px;width:49px;height:20px"></div>
<span style="left:340.48px;top:508.00px;line-height:15px;font:11px 'Liberation Sans',sans-serif;line-height:15px;transform:scaleX(0.8386);transform-origin:50% 50%;color:#000;white-space:pre">Mgens</span>
<div class="chk" style="left:281px;top:524px;width:13px;height:13px"></div>
<span style="left:298.30px;top:522.50px;line-height:15px;font:11px 'Liberation Sans',sans-serif;line-height:15px;transform:scaleX(0.8276);transform-origin:0 50%;color:#000;white-space:pre">Clipping plane</span>
<div style="left:276px;top:534px;width:110px;height:12.4px;overflow:hidden"><span style="position:absolute;left:16px;top:2.2px;font:11px 'Liberation Sans',sans-serif;line-height:15px;transform:scaleX(.88);transform-origin:0 0">Az</span><span style="position:absolute;left:52.3px;top:2.2px;font:11px 'Liberation Sans',sans-serif;line-height:15px;transform:scaleX(.88);transform-origin:0 0">El</span><span style="position:absolute;left:89.5px;top:2.2px;font:11px 'Liberation Sans',sans-serif;line-height:15px;transform:scaleX(.84);transform-origin:0 0">D</span></div>
<div class="edit" style="left:278px;top:552px;width:34px;height:21px"></div>
<span style="left:291.94px;top:554.70px;line-height:15px;font:11px 'Liberation Sans',sans-serif;line-height:15px;transform:scaleX(0.8400);transform-origin:50% 50%;color:#000;white-space:pre">0</span>
<div class="edit" style="left:313px;top:552px;width:34px;height:21px"></div>
<span style="left:326.94px;top:554.70px;line-height:15px;font:11px 'Liberation Sans',sans-serif;line-height:15px;transform:scaleX(0.8400);transform-origin:50% 50%;color:#000;white-space:pre">0</span>
<div class="edit" style="left:348px;top:552px;width:35px;height:21px"></div>
<span style="left:352.96px;top:554.70px;line-height:15px;font:11px 'Liberation Sans',sans-serif;line-height:15px;transform:scaleX(0.8400);transform-origin:50% 50%;color:#000;white-space:pre">-0.01</span>
<div class="btn" style="left:291px;top:622px;width:87px;height:23px"></div>
<span style="left:295.48px;top:625.50px;line-height:15px;font:11px 'Liberation Sans',sans-serif;line-height:15px;transform:scaleX(0.8646);transform-origin:50% 50%;color:#000;white-space:pre">Record movie...</span>
<div class="chk" style="left:295px;top:649px;width:13px;height:13px"><svg width="13" height="13" viewBox="0 0 13 13" style="position:absolute;left:-1px;top:-1px"><path d="M3.2 6 L5.6 8.4 L10 4" stroke="#000" stroke-width="2.1" fill="none"/></svg></div>
<span style="left:312.20px;top:647.80px;line-height:15px;font:11px 'Liberation Sans',sans-serif;line-height:15px;transform:scaleX(0.8084);transform-origin:0 50%;color:#000;white-space:pre">Auto-name</span>
<span style="left:297.20px;top:669.70px;line-height:15px;font:11px 'Liberation Sans',sans-serif;line-height:15px;transform:scaleX(0.8631);transform-origin:0 50%;color:#000;white-space:pre">Frames/sec</span>
<div class="edit" style="left:352px;top:668px;width:26px;height:21px"></div>
<span style="left:358.88px;top:670.70px;line-height:15px;font:11px 'Liberation Sans',sans-serif;line-height:15px;transform:scaleX(0.8400);transform-origin:50% 50%;color:#000;white-space:pre">10</span>
<div class="btn" style="left:294px;top:692px;width:82px;height:23px"></div>
<span style="left:299.03px;top:695.50px;line-height:15px;font:11px 'Liberation Sans',sans-serif;line-height:15px;transform:scaleX(0.8613);transform-origin:50% 50%;color:#000;white-space:pre">Take snapshot</span>
<div class="btn" style="left:291px;top:719px;width:87px;height:23px"></div>
<span style="left:302.51px;top:722.50px;line-height:15px;font:11px 'Liberation Sans',sans-serif;line-height:15px;transform:scaleX(0.8637);transform-origin:50% 50%;color:#000;white-space:pre">Show history</span>
<div style="left:391px;top:47px;width:670px;height:655px;background:#fff"></div>
<div style="left:1047px;top:47px;width:14px;height:1px;background:#66cc66"></div>
<span style="left:399.50px;top:54.50px;line-height:33px;font:bold 29px 'Liberation Sans',sans-serif;line-height:33px;transform:scaleX(0.8207);transform-origin:0 50%;color:#000;white-space:pre">time 1.610: KAPAR</span>
<svg style="left:391px;top:47px" width="670" height="654" viewBox="391 47 670 654"><path d="M392.6 361.5V388L718.3 569.0L1043.7 389.0M718.3 569.0l-8.8 4.8M718.3 569.0l7.7 4.3M685.8 550.9l-8.8 4.8M750.8 551.0l7.7 4.3M653.2 532.7l-8.8 4.8M783.4 533.0l7.7 4.3M620.7 514.5l-8.8 4.8M815.9 515.0l7.7 4.3M588.2 496.4l-8.8 4.8M848.5 497.0l7.7 4.3M555.6 478.2l-8.8 4.8M881.0 479.0l7.7 4.3M523.1 460.1l-8.8 4.8M913.5 461.0l7.7 4.3M490.6 442.0l-8.8 4.8M946.1 443.0l7.7 4.3M458.1 423.8l-8.8 4.8M978.6 425.0l7.7 4.3M425.5 405.6l-8.8 4.8M1011.2 407.0l7.7 4.3M1043.7 389.0l7.7 4.3" stroke="#000" stroke-width="1" fill="none"/><g font-family="'Liberation Sans',sans-serif" font-size="9" fill="#000"><text x="705.3" y="586.3" text-anchor="end">-2.5</text><text x="730.0" y="586.3">-2.5</text><text x="672.8" y="568.1" text-anchor="end">-2</text><text x="762.5" y="568.3">-2</text><text x="640.2" y="550.0" text-anchor="end">-1.5</text><text x="795.1" y="550.3">-1.5</text><text x="607.7" y="531.8" text-anchor="end">-1</text><text x="827.6" y="532.3">-1</text><text x="575.2" y="513.7" text-anchor="end">-0.5</text><text x="860.2" y="514.3">-0.5</text><text x="542.6" y="495.6" text-anchor="end">0</text><text x="892.7" y="496.3">0</text><text x="510.1" y="477.4" text-anchor="end">0.5</text><text x="925.2" y="478.3">0.5</text><text x="477.6" y="459.3" text-anchor="end">1</text><text x="957.8" y="460.3">1</text><text x="445.1" y="441.1" text-anchor="end">1.5</text><text x="990.3" y="442.3">1.5</text><text x="412.5" y="422.9" text-anchor="end">2</text><text x="1022.9" y="424.3">2</text><text x="1055.4" y="406.3">2.5</text></g><g font-family="'Liberation Sans',sans-serif" font-size="14" fill="#000"><text x="522" y="505" textLength="8.5" lengthAdjust="spacingAndGlyphs">Y</text><text x="904.5" y="505" textLength="8.5" lengthAdjust="spacingAndGlyphs">X</text></g><path d="M511.9 369.0L513.9 384.8L513.9 394.7L511.9 378.5ZM513.9 384.8L519.7 400.2L519.7 410.6L513.9 394.7ZM519.7 400.2L529.0 415.0L529.0 425.9L519.7 410.6ZM529.0 415.0L540.9 429.1L540.9 440.4L529.0 425.9ZM540.9 429.1L556.7 441.8L556.7 453.5L540.9 440.4ZM556.7 441.8L575.2 453.1L575.2 465.1L556.7 453.5ZM575.2 453.1L597.0 462.0L597.0 474.3L575.2 465.1ZM597.0 462.0L619.8 469.4L619.8 482.0L597.0 474.3ZM619.8 469.4L642.6 476.8L642.6 489.6L619.8 482.0ZM642.6 476.8L667.0 482.5L667.0 495.5L642.6 489.6ZM667.0 482.5L692.3 487.6L692.3 500.6L667.0 495.5ZM692.3 487.6L719.0 490.5L719.0 503.5L692.3 500.6ZM719.0 490.5L745.4 486.3L745.4 499.3L719.0 503.5ZM745.4 486.3L770.0 480.3L770.0 493.2L745.4 499.3ZM770.0 480.3L793.9 474.7L793.9 487.4L770.0 493.2ZM793.9 474.7L816.2 467.4L816.2 479.9L793.9 487.4ZM816.2 467.4L837.6 459.3L837.6 471.6L816.2 479.9ZM837.6 459.3L858.4 450.5L858.4 462.5L837.6 471.6ZM858.4 450.5L878.1 440.4L878.1 452.1L858.4 462.5ZM878.1 440.4L895.6 428.6L895.6 439.9L878.1 452.1ZM895.6 428.6L908.5 414.9L908.5 425.8L895.6 439.9ZM908.5 414.9L918.9 400.3L918.9 410.7L908.5 425.8ZM918.9 400.3L923.6 384.7L923.6 394.6L918.9 410.7ZM923.6 384.7L925.5 369.0L925.5 378.5L923.6 394.6Z" fill="#fd0d0d" stroke="#fd0d0d" stroke-width="1"/><path d="M511.9 369.0v9.5M513.9 384.8v9.9M519.7 400.2v10.4M529.0 415.0v10.9M540.9 429.1v11.3M556.7 441.8v11.7M575.2 453.1v12.1M597.0 462.0v12.4M619.8 469.4v12.6M642.6 476.8v12.8M667.0 482.5v13.0M692.3 487.6v13.0M719.0 490.5v13.0M745.4 486.3v13.0M770.0 480.3v12.9M793.9 474.7v12.8M816.2 467.4v12.5M837.6 459.3v12.3M858.4 450.5v12.0M878.1 440.4v11.7M895.6 428.6v11.3M908.5 414.9v10.9M918.9 400.3v10.4M923.6 384.7v9.9M925.5 369.0v9.5" stroke="#000" stroke-width="1" fill="none"/><path d="M859.2 287.0L841.7 275.5L821.4 265.3L796.2 260.0L770.3 257.0L745.3 252.4L719.0 249.6L692.1 249.4L665.3 251.8L640.1 257.7L616.6 265.4L594.4 274.1L574.1 284.3L555.7 295.8L540.0 308.6L527.8 322.7L519.0 337.7L513.7 353.2L511.9 369.0L513.9 384.8L519.7 400.2L529.0 415.0L540.9 429.1L556.7 441.8L575.2 453.1L597.0 462.0L619.8 469.4L642.6 476.8L667.0 482.5L692.3 487.6L719.0 490.5L745.4 486.3L770.0 480.3L793.9 474.7L816.2 467.4L837.6 459.3L858.4 450.5L878.1 440.4L895.6 428.6L908.5 414.9L918.9 400.3L923.6 384.7L925.5 369.0L924.4 353.2L920.1 337.5L910.7 322.6L895.8 309.3L877.8 297.8Z" fill="#fd0d0d"/><path d="M768 452L768 439M768 452L753 465M768 452L784 453M712 462L698 468M712 462L721 468M712 462L716 450M713 476L721 468M713 476L698 468M713 476L719 490M783 469L770 480M783 469L794 475M783 469L784 453M769 466L753 465M769 466L770 480M769 466L784 453M755 450L768 439M755 450L745 447M755 450L753 465M727 455L721 468M727 455L745 447M727 455L716 450M740 460L745 447M740 460L721 468M740 460L753 465M731 385L729 376M731 385L717 389M731 385L747 391M733 373L729 376M733 373L749 375M733 373L719 368M846 440L850 429M846 440L828 439M846 440L858 450M856 421L850 429M856 421L874 417M856 421L844 417M798 465L794 475M798 465L816 467M798 465L784 453M808 413L820 421M808 413L817 404M808 413L788 414M827 414L817 404M827 414L820 421M827 414L844 417M838 422L820 421M838 422L850 429M838 422L844 417M833 430L850 429M833 430L820 421M833 430L828 439M525 376L514 385M525 376L548 375M525 376L512 369M536 384L548 375M536 384L514 385M536 384L545 394M565 379L548 375M565 379L573 391M565 379L573 371M555 386L573 391M555 386L548 375M555 386L545 394M572 444L585 436M572 444L557 442M572 444L575 453M677 287L690 292M677 287L679 270M677 287L662 300M662 281L679 270M662 281L645 273M662 281L662 300M596 351L573 355M596 351L602 358M596 351L611 341M583 361L602 358M583 361L573 355M583 361L573 371M534 351L514 353M534 351L544 359M534 351L545 339M523 360L544 359M523 360L514 353M523 360L512 369M535 368L548 375M535 368L544 359M535 368L512 369M564 362L573 355M564 362L544 359M564 362L573 371M555 368L544 359M555 368L548 375M555 368L573 371M735 258L742 273M735 258L745 252M735 258L719 250M724 263L711 267M724 263L742 273M724 263L719 250M707 255L692 249M707 255L711 267M707 255L719 250M694 262L711 267M694 262L692 249M694 262L679 270M728 276L742 273M728 276L711 267M728 276L730 289M711 283L711 267M711 283L690 292M711 283L730 289M693 276L690 292M693 276L711 267M693 276L679 270M789 276L767 285M789 276L805 284M789 276L796 260M784 288L805 284M784 288L767 285M784 288L781 295M703 482L698 468M703 482L692 488M703 482L719 490M686 479L667 482M686 479L692 488M686 479L698 468M659 474L667 482M659 474L669 463M659 474L643 477M650 463L669 463M650 463L638 449M650 463L643 477M654 451L638 449M654 451L669 463M654 451L657 442M678 471L669 463M678 471L667 482M678 471L698 468M756 477L745 486M756 477L770 480M756 477L753 465M729 482L745 486M729 482L721 468M729 482L719 490M740 473L721 468M740 473L745 486M740 473L753 465M777 413L766 405M777 413L776 421M777 413L788 414M766 397L766 405M766 397L787 396M766 397L747 391M780 405L787 396M780 405L766 405M780 405L788 414M797 405L817 404M797 405L787 396M797 405L788 414M751 404L740 415M751 404L766 405M751 404L747 391M761 414L740 415M761 414L776 421M761 414L766 405M718 373L707 375M718 373L729 376M718 373L719 368M718 380L707 375M718 380L717 389M718 380L729 376M839 407L855 400M839 407L817 404M839 407L844 417M858 411L874 417M858 411L855 400M858 411L844 417M873 406L855 400M873 406L874 417M873 406L890 399M816 376L839 376M816 376L810 366M816 376L801 386M794 377L810 366M794 377L772 378M794 377L801 386M862 440L878 440M862 440L850 429M862 440L858 450M883 429L874 417M883 429L878 440M883 429L896 429M867 429L878 440M867 429L874 417M867 429L850 429M909 373L900 364M909 373L903 387M909 373L926 369M886 359L900 364M886 359L894 350M886 359L866 363M917 380L903 387M917 380L924 385M917 380L926 369M841 450L828 439M841 450L838 459M841 450L858 450M872 353L894 350M872 353L857 346M872 353L866 363M895 320L896 309M895 320L879 328M895 320L911 323M861 335L857 346M861 335L879 328M861 335L845 331M877 341L879 328M877 341L857 346M877 341L894 350M903 329L879 328M903 329L920 338M903 329L911 323M898 339L920 338M898 339L879 328M898 339L894 350M531 403L545 394M531 403L520 400M531 403L529 415M526 393L514 385M526 393L520 400M526 393L545 394M582 380L573 391M582 380L599 380M582 380L573 371M591 370L599 380M591 370L602 358M591 370L573 371M613 370L602 358M613 370L599 380M613 370L636 371M596 388L615 395M596 388L599 380M596 388L573 391M637 401L660 399M637 401L615 395M637 401L636 409M571 432L572 418M571 432L557 442M571 432L585 436M713 332L695 325M713 332L716 343M713 332L726 327M660 369L675 376M660 369L670 360M660 369L636 371M617 308L637 307M617 308L600 300M617 308L612 316M610 324L596 323M610 324L620 333M610 324L612 316M609 332L620 333M609 332L596 323M609 332L611 341M558 334L573 341M558 334L557 323M558 334L545 339M554 347L544 359M554 347L573 341M554 347L545 339M563 352L573 341M563 352L544 359M563 352L573 355M586 346L573 341M586 346L573 355M586 346L611 341M593 335L596 323M593 335L573 341M593 335L611 341M575 329L573 341M575 329L596 323M575 329L557 323M683 300L698 308M683 300L690 292M683 300L662 300M707 320L698 308M707 320L695 325M707 320L726 327M679 257L692 249M679 257L665 252M679 257L679 270M650 261L645 273M650 261L665 252M650 261L640 258M663 265L665 252M663 265L645 273M663 265L679 270M590 286L600 300M590 286L594 274M590 286L574 284M615 350L602 358M615 350L631 350M615 350L611 341M623 360L631 350M623 360L602 358M623 360L636 371M646 360L670 360M646 360L631 350M646 360L636 371M660 355L631 350M660 355L670 360M660 355L678 355M752 261L770 257M752 261L745 252M752 261L742 273M778 267L770 257M778 267L767 285M778 267L796 260M760 272L767 285M760 272L770 257M760 272L742 273M745 323L752 329M745 323L756 313M745 323L726 327M731 333L716 343M731 333L752 329M731 333L726 327M774 308L756 313M774 308L786 316M774 308L781 295M764 319L752 329M764 319L786 316M764 319L756 313M764 300L754 293M764 300L756 313M764 300L781 295M767 291L767 285M767 291L754 293M767 291L781 295M742 285L754 293M742 285L742 273M742 285L730 289M754 283L754 293M754 283L767 285M754 283L742 273M807 270L805 284M807 270L821 265M807 270L796 260M823 275L821 265M823 275L805 284M823 275L842 276M844 286L842 276M844 286L830 294M844 286L859 287M825 284L805 284M825 284L830 294M825 284L842 276M633 465L638 449M633 465L620 469M633 465L643 477M597 454L597 462M597 454L619 448M597 454L575 453M593 446L619 448M593 446L585 436M593 446L575 453M612 460L620 469M612 460L619 448M612 460L597 462M625 455L619 448M625 455L620 469M625 455L638 449M667 428L685 423M667 428L658 419M667 428L657 442M677 416L658 419M677 416L685 423M677 416L686 407M651 409L658 419M651 409L660 399M651 409L636 409M668 408L660 399M668 408L658 419M668 408L686 407M671 450L669 463M671 450L686 444M671 450L657 442M676 437L686 444M676 437L685 423M676 437L657 442M700 454L686 444M700 454L698 468M700 454L716 450M684 459L686 444M684 459L669 463M684 459L698 468M816 433L820 421M816 433L800 438M816 433L828 439M781 433L800 438M781 433L776 421M781 433L768 439M802 424L800 438M802 424L820 421M802 424L788 414M788 424L776 421M788 424L800 438M788 424L788 414M784 443L800 438M784 443L768 439M784 443L784 453M726 398L717 389M726 398L715 413M726 398L747 391M734 406L715 413M734 406L740 415M734 406L747 391M706 403L715 413M706 403L717 389M706 403L686 407M760 430L776 421M760 430L737 430M760 430L768 439M751 422L740 415M751 422L737 430M751 422L776 421M750 438L737 430M750 438L745 447M750 438L768 439M733 442L745 447M733 442L737 430M733 442L716 450M730 420L715 413M730 420L737 430M730 420L740 415M707 368L693 361M707 368L707 375M707 368L719 368M707 363L709 360M707 363L693 361M707 363L719 368M679 366L675 376M679 366L693 361M679 366L670 360M692 371L693 361M692 371L675 376M692 371L707 375M694 359L693 361M694 359L709 360M694 359L678 355M681 359L670 360M681 359L693 361M681 359L678 355M833 399L855 400M833 399L828 394M833 399L817 404M805 392L787 396M805 392L828 394M805 392L801 386M810 398L828 394M810 398L787 396M810 398L817 404M823 385L828 394M823 385L839 376M823 385L801 386M883 389L903 387M883 389L857 380M883 389L890 399M868 393L857 380M868 393L855 400M868 393L890 399M854 373L839 376M854 373L857 380M854 373L866 363M847 391L857 380M847 391L828 394M847 391L855 400M841 383L828 394M841 383L857 380M841 383L839 376M874 369L857 380M874 369L900 364M874 369L866 363M887 377L900 364M887 377L857 380M887 377L903 387M783 388L762 382M783 388L787 396M783 388L801 386M778 382L772 378M778 382L762 382M778 382L801 386M765 390L787 396M765 390L762 382M765 390L747 391M761 378L762 382M761 378L772 378M761 378L749 375M746 383L762 382M746 383L729 376M746 383L747 391M747 378L762 382M747 378L749 375M747 378L729 376M913 347L924 353M913 347L920 338M913 347L894 350M906 356L900 364M906 356L924 353M906 356L894 350M917 362L924 353M917 362L900 364M917 362L926 369M893 420L909 415M893 420L874 417M893 420L896 429M891 411L874 417M891 411L909 415M891 411L890 399M904 396L919 400M904 396L903 387M904 396L890 399M915 391L919 400M915 391L924 385M915 391L903 387M906 405L909 415M906 405L919 400M906 405L890 399M826 368L839 376M826 368L830 361M826 368L810 366M845 367L830 361M845 367L839 376M845 367L866 363M851 357L857 346M851 357L830 361M851 357L866 363M879 307L878 298M879 307L864 315M879 307L896 309M880 318L864 315M880 318L879 328M880 318L896 309M863 325L879 328M863 325L864 315M863 325L845 331M623 378L599 380M623 378L635 382M623 378L636 371M616 385L615 395M616 385L635 382M616 385L599 380M637 392L635 382M637 392L615 395M637 392L660 399M649 376L635 382M649 376L675 376M649 376L636 371M656 385L675 376M656 385L635 382M656 385L660 399M556 430L572 418M556 430L541 429M556 430L557 442M593 397L589 405M593 397L615 395M593 397L573 391M702 339L694 349M702 339L716 343M702 339L695 325M694 355L709 360M694 355L694 349M694 355L678 355M707 351L716 343M707 351L694 349M707 351L709 360M705 384L707 375M705 384L690 389M705 384L717 389M690 380L675 376M690 380L690 389M690 380L707 375M698 395L717 389M698 395L690 389M698 395L686 407M679 398L690 389M679 398L660 399M679 398L686 407M675 388L690 389M675 388L675 376M675 388L660 399M621 297L637 307M621 297L625 283M621 297L600 300M607 285L625 283M607 285L594 274M607 285L600 300M644 285L645 273M644 285L625 283M644 285L662 300M641 297L625 283M641 297L637 307M641 297L662 300M626 324L620 333M626 324L644 322M626 324L612 316M631 315L644 322M631 315L637 307M631 315L612 316M543 328L557 323M543 328L528 323M543 328L545 339M542 318L540 309M542 318L528 323M542 318L557 323M596 307L600 300M596 307L575 306M596 307L612 316M594 315L575 306M594 315L596 323M594 315L612 316M568 295L556 296M568 295L575 306M568 295L574 284M583 297L575 306M583 297L600 300M583 297L574 284M576 317L596 323M576 317L575 306M576 317L557 323M557 303L540 309M557 303L575 306M557 303L556 296M558 312L575 306M558 312L540 309M558 312L557 323M736 315L756 313M736 315L724 304M736 315L726 327M716 313L724 304M716 313L698 308M716 313L726 327M736 295L724 304M736 295L754 293M736 295L730 289M745 303L754 293M745 303L724 304M745 303L756 313M715 295L690 292M715 295L724 304M715 295L730 289M704 301L698 308M704 301L724 304M704 301L690 292M740 340L752 349M740 340L752 329M740 340L716 343M807 323L826 322M807 323L786 316M807 323L808 331M827 328L845 331M827 328L826 322M827 328L808 331M845 323L864 315M845 323L826 322M845 323L845 331M859 295L839 301M859 295L878 298M859 295L859 287M843 294L830 294M843 294L839 301M843 294L859 287M860 305L839 301M860 305L864 315M860 305L878 298M843 313L839 301M843 313L826 322M843 313L864 315M793 305L786 316M793 305L811 303M793 305L781 295M799 294L811 303M799 294L805 284M799 294L781 295M815 294L811 303M815 294L830 294M815 294L805 284M808 313L826 322M808 313L811 303M808 313L786 316M827 300L811 303M827 300L839 301M827 300L830 294M825 309L839 301M825 309L811 303M825 309L826 322M611 440L619 448M611 440L629 434M611 440L585 436M641 421L629 434M641 421L658 419M641 421L636 409M628 444L629 434M628 444L619 448M628 444L638 449M641 442L629 434M641 442L638 449M641 442L657 442M648 432L658 419M648 432L629 434M648 432L657 442M813 442L800 438M813 442L811 449M813 442L828 439M826 449L811 449M826 449L838 459M826 449L828 439M822 459L838 459M822 459L811 449M822 459L816 467M804 457L816 467M804 457L811 449M804 457L784 453M798 447L811 449M798 447L800 438M798 447L784 453M718 423L703 426M718 423L737 430M718 423L715 413M692 419L685 423M692 419L703 426M692 419L686 407M701 415L703 426M701 415L715 413M701 415L686 407M719 435L737 430M719 435L703 426M719 435L716 450M702 440L703 426M702 440L686 444M702 440L716 450M691 431L686 444M691 431L703 426M691 431L685 423M843 341L827 345M843 341L857 346M843 341L845 331M838 350L827 345M838 350L830 361M838 350L857 346M827 336L827 345M827 336L845 331M827 336L808 331M541 419L541 429M541 419L552 414M541 419L529 415M555 420L552 414M555 420L541 429M555 420L572 418M542 407L552 414M542 407L545 394M542 407L529 415M557 399L552 414M557 399L573 391M557 399L545 394M571 403L552 414M571 403L589 405M571 403L573 391M571 412L589 405M571 412L552 414M571 412L572 418M620 407L615 395M620 407L607 417M620 407L636 409M604 406L589 405M604 406L607 417M604 406L615 395M624 420L607 417M624 420L629 434M624 420L636 409M607 429L629 434M607 429L607 417M607 429L585 436M588 424L607 417M588 424L572 418M588 424L585 436M590 413L607 417M590 413L589 405M590 413L572 418M612 274L625 283M612 274L617 265M612 274L594 274M634 265L617 265M634 265L645 273M634 265L640 258M629 274L617 265M629 274L625 283M629 274L645 273M687 337L671 336M687 337L694 349M687 337L695 325M681 347L694 349M681 347L671 336M681 347L678 355M674 307L662 315M674 307L698 308M674 307L662 300M685 316L698 308M685 316L662 315M685 316L695 325M654 307L637 307M654 307L662 315M654 307L662 300M648 315L644 322M648 315L662 315M648 315L637 307M676 325L662 315M676 325L671 336M676 325L695 325M659 324L671 336M659 324L662 315M659 324L644 322M526 343L519 338M526 343L514 353M526 343L545 339M531 333L528 323M531 333L519 338M531 333L545 339M720 356L734 363M720 356L716 343M720 356L709 360M734 352L734 363M734 352L752 349M734 352L716 343M734 369L749 375M734 369L734 363M734 369L719 368M721 364L734 363M721 364L709 360M721 364L719 368M764 340L752 349M764 340L787 343M764 340L752 329M794 330L786 316M794 330L787 343M794 330L808 331M775 329L787 343M775 329L786 316M775 329L752 329M808 340L787 343M808 340L827 345M808 340L808 331M637 331L646 339M637 331L644 322M637 331L620 333M654 332L646 339M654 332L671 336M654 332L644 322M626 337L646 339M626 337L620 333M626 337L611 341M629 343L631 350M629 343L646 339M629 343L611 341M652 348L646 339M652 348L631 350M652 348L678 355M665 343L671 336M665 343L646 339M665 343L678 355M754 357L734 363M754 357L776 360M754 357L752 349M771 351L776 360M771 351L787 343M771 351L752 349M766 371L772 378M766 371L776 360M766 371L749 375M753 366L776 360M753 366L734 363M753 366L749 375M786 368L776 360M786 368L772 378M786 368L810 366M803 348L787 343M803 348L795 356M803 348L827 345M812 361L830 361M812 361L795 356M812 361L810 366M817 354L827 345M817 354L795 356M817 354L830 361M793 361L795 356M793 361L776 360M793 361L810 366M786 353L776 360M786 353L795 356M786 353L787 343" stroke="#d40000" stroke-width="1" fill="none" shape-rendering="crispEdges"/><clipPath id="cp"><path d="M859.2 287.0L841.7 275.5L821.4 265.3L796.2 260.0L770.3 257.0L745.3 252.4L719.0 249.6L692.1 249.4L665.3 251.8L640.1 257.7L616.6 265.4L594.4 274.1L574.1 284.3L555.7 295.8L540.0 308.6L527.8 322.7L519.0 337.7L513.7 353.2L511.9 369.0L513.9 384.8L519.7 400.2L529.0 415.0L540.9 429.1L556.7 441.8L575.2 453.1L597.0 462.0L619.8 469.4L642.6 476.8L667.0 482.5L692.3 487.6L719.0 490.5L745.4 486.3L770.0 480.3L793.9 474.7L816.2 467.4L837.6 459.3L858.4 450.5L878.1 440.4L895.6 428.6L908.5 414.9L918.9 400.3L923.6 384.7L925.5 369.0L924.4 353.2L920.1 337.5L910.7 322.6L895.8 309.3L877.8 297.8Z"/></clipPath><path clip-path="url(#cp)" d="M719.3 379.8L734.2 375.2M719.3 379.8L709.3 372.4M719.3 379.8L693.5 373.1M719.3 379.8L706.8 387.2M719.3 379.8L728.8 388.1M719.3 379.8L749.4 387.0M734.2 375.2L709.3 372.4M734.2 375.2L749.4 387.0M734.2 375.2L751.6 360.9M734.2 375.2L716.1 354.9M734.2 375.2L775.6 372.1M709.3 372.4L693.5 373.1M709.3 372.4L716.1 354.9M709.3 372.4L694.1 361.1M709.3 372.4L678.3 367.4M693.5 373.1L706.8 387.2M693.5 373.1L678.3 367.4M693.5 373.1L670.2 372.2M693.5 373.1L674.7 388.0M706.8 387.2L728.8 388.1M706.8 387.2L674.7 388.0M706.8 387.2L689.7 401.2M706.8 387.2L717.3 400.6M728.8 388.1L749.4 387.0M728.8 388.1L717.3 400.6M728.8 388.1L747.0 402.6M728.8 388.1L762.1 393.7M749.4 387.0L762.1 393.7M749.4 387.0L771.8 389.5M749.4 387.0L775.6 372.1M751.6 360.9L716.1 354.9M751.6 360.9L775.6 372.1M751.6 360.9L751.7 341.2M751.6 360.9L787.2 354.5M716.1 354.9L694.1 361.1M716.1 354.9L751.7 341.2M716.1 354.9L726.4 339.4M716.1 354.9L695.3 337.3M694.1 361.1L678.3 367.4M694.1 361.1L695.3 337.3M694.1 361.1L671.0 348.1M678.3 367.4L670.2 372.2M678.3 367.4L671.0 348.1M678.3 367.4L646.0 350.6M678.3 367.4L631.1 361.6M670.2 372.2L674.7 388.0M670.2 372.2L631.1 361.6M670.2 372.2L636.2 383.3M674.7 388.0L689.7 401.2M674.7 388.0L636.2 383.3M674.7 388.0L634.8 393.6M674.7 388.0L659.7 410.7M689.7 401.2L717.3 400.6M689.7 401.2L659.7 410.7M689.7 401.2L686.4 419.0M717.3 400.6L747.0 402.6M717.3 400.6L686.4 419.0M717.3 400.6L714.5 425.5M747.0 402.6L762.1 393.7M747.0 402.6L714.5 425.5M747.0 402.6L739.6 427.3M747.0 402.6L765.8 416.8M747.0 402.6L786.6 408.5M762.1 393.7L771.8 389.5M762.1 393.7L786.6 408.5M762.1 393.7L800.6 398.3M771.8 389.5L775.6 372.1M771.8 389.5L800.6 398.3M771.8 389.5L809.9 378.4M775.6 372.1L809.9 378.4M775.6 372.1L794.8 368.4M775.6 372.1L787.2 354.5M751.7 341.2L726.4 339.4M751.7 341.2L787.2 354.5M751.7 341.2L756.0 324.7M751.7 341.2L785.6 327.6M726.4 339.4L695.3 337.3M726.4 339.4L756.0 324.7M726.4 339.4L724.4 315.6M726.4 339.4L698.3 319.6M695.3 337.3L671.0 348.1M695.3 337.3L698.3 319.6M695.3 337.3L662.1 326.8M671.0 348.1L646.0 350.6M671.0 348.1L662.1 326.8M671.0 348.1L644.4 334.1M646.0 350.6L631.1 361.6M646.0 350.6L644.4 334.1M646.0 350.6L620.3 344.6M646.0 350.6L611.0 352.9M631.1 361.6L636.2 383.3M631.1 361.6L611.0 352.9M631.1 361.6L602.4 370.1M636.2 383.3L634.8 393.6M636.2 383.3L602.4 370.1M636.2 383.3L599.2 391.7M634.8 393.6L659.7 410.7M634.8 393.6L599.2 391.7M634.8 393.6L615.4 407.1M659.7 410.7L686.4 419.0M659.7 410.7L615.4 407.1M659.7 410.7L635.7 421.1M659.7 410.7L657.8 430.7M686.4 419.0L714.5 425.5M686.4 419.0L657.8 430.7M686.4 419.0L685.2 435.0M686.4 419.0L703.1 437.7M714.5 425.5L739.6 427.3M714.5 425.5L703.1 437.7M714.5 425.5L736.8 441.7M739.6 427.3L765.8 416.8M739.6 427.3L736.8 441.7M739.6 427.3L776.3 433.3M765.8 416.8L786.6 408.5M765.8 416.8L776.3 433.3M765.8 416.8L787.7 426.1M786.6 408.5L800.6 398.3M786.6 408.5L787.7 426.1M786.6 408.5L816.7 416.1M786.6 408.5L828.2 406.1M800.6 398.3L809.9 378.4M800.6 398.3L828.2 406.1M800.6 398.3L839.0 388.1M809.9 378.4L794.8 368.4M809.9 378.4L839.0 388.1M809.9 378.4L830.2 372.6M794.8 368.4L787.2 354.5M794.8 368.4L830.2 372.6M794.8 368.4L827.4 357.3M787.2 354.5L827.4 357.3M787.2 354.5L808.4 343.2M787.2 354.5L785.6 327.6M756.0 324.7L724.4 315.6M756.0 324.7L785.6 327.6M756.0 324.7L753.5 304.6M756.0 324.7L781.2 307.3M724.4 315.6L698.3 319.6M724.4 315.6L753.5 304.6M724.4 315.6L730.4 301.5M724.4 315.6L690.2 303.6M698.3 319.6L662.1 326.8M698.3 319.6L690.2 303.6M698.3 319.6L661.9 311.9M662.1 326.8L644.4 334.1M662.1 326.8L661.9 311.9M662.1 326.8L637.0 319.2M644.4 334.1L620.3 344.6M644.4 334.1L637.0 319.2M644.4 334.1L612.3 328.1M620.3 344.6L611.0 352.9M620.3 344.6L612.3 328.1M620.3 344.6L596.0 334.7M611.0 352.9L602.4 370.1M611.0 352.9L596.0 334.7M611.0 352.9L572.6 353.0M611.0 352.9L573.4 366.8M602.4 370.1L599.2 391.7M602.4 370.1L573.4 366.8M602.4 370.1L572.6 382.8M599.2 391.7L615.4 407.1M599.2 391.7L572.6 382.8M599.2 391.7L572.9 402.6M615.4 407.1L635.7 421.1M615.4 407.1L572.9 402.6M615.4 407.1L589.3 417.1M615.4 407.1L607.5 429.3M635.7 421.1L657.8 430.7M635.7 421.1L607.5 429.3M635.7 421.1L628.9 446.2M657.8 430.7L685.2 435.0M657.8 430.7L628.9 446.2M657.8 430.7L657.1 454.4M685.2 435.0L703.1 437.7M685.2 435.0L657.1 454.4M685.2 435.0L686.0 456.4M703.1 437.7L736.8 441.7M703.1 437.7L686.0 456.4M703.1 437.7L716.4 462.0M736.8 441.7L776.3 433.3M736.8 441.7L716.4 462.0M736.8 441.7L744.6 458.9M736.8 441.7L768.2 450.7M776.3 433.3L787.7 426.1M776.3 433.3L768.2 450.7M776.3 433.3L799.7 450.1M787.7 426.1L816.7 416.1M787.7 426.1L799.7 450.1M787.7 426.1L819.8 433.2M816.7 416.1L828.2 406.1M816.7 416.1L819.8 433.2M816.7 416.1L844.2 429.0M816.7 416.1L855.4 411.9M828.2 406.1L839.0 388.1M828.2 406.1L855.4 411.9M828.2 406.1L857.0 391.5M839.0 388.1L830.2 372.6M839.0 388.1L857.0 391.5M839.0 388.1L865.8 375.5M830.2 372.6L827.4 357.3M830.2 372.6L865.8 375.5M830.2 372.6L857.4 357.5M827.4 357.3L808.4 343.2M827.4 357.3L857.4 357.5M827.4 357.3L845.2 343.3M808.4 343.2L785.6 327.6M808.4 343.2L845.2 343.3M808.4 343.2L826.3 333.7M785.6 327.6L826.3 333.7M785.6 327.6L811.1 315.2M785.6 327.6L781.2 307.3M753.5 304.6L730.4 301.5M753.5 304.6L781.2 307.3M753.5 304.6L741.8 284.8M753.5 304.6L766.5 296.8M730.4 301.5L690.2 303.6M730.4 301.5L741.8 284.8M730.4 301.5L711.0 278.8M690.2 303.6L661.9 311.9M690.2 303.6L711.0 278.8M690.2 303.6L679.0 282.3M661.9 311.9L637.0 319.2M661.9 311.9L679.0 282.3M661.9 311.9L645.2 285.3M661.9 311.9L624.8 294.7M637.0 319.2L612.3 328.1M637.0 319.2L624.8 294.7M637.0 319.2L600.5 311.7M612.3 328.1L596.0 334.7M612.3 328.1L600.5 311.7M612.3 328.1L575.1 317.7M596.0 334.7L572.6 353.0M596.0 334.7L575.1 317.7M596.0 334.7L557.5 334.9M572.6 353.0L573.4 366.8M572.6 353.0L557.5 334.9M572.6 353.0L544.8 351.4M572.6 353.0L544.5 371.2M573.4 366.8L572.6 382.8M573.4 366.8L544.5 371.2M572.6 382.8L572.9 402.6M572.6 382.8L544.5 371.2M572.6 382.8L548.0 387.0M572.9 402.6L589.3 417.1M572.9 402.6L548.0 387.0M572.9 402.6L545.5 405.6M572.9 402.6L551.8 425.8M589.3 417.1L607.5 429.3M589.3 417.1L551.8 425.8M589.3 417.1L571.8 429.9M607.5 429.3L628.9 446.2M607.5 429.3L571.8 429.9M607.5 429.3L585.3 448.5M628.9 446.2L657.1 454.4M628.9 446.2L585.3 448.5M628.9 446.2L619.0 460.0M628.9 446.2L637.6 460.5M657.1 454.4L686.0 456.4M657.1 454.4L637.6 460.5M657.1 454.4L668.7 475.4M686.0 456.4L716.4 462.0M686.0 456.4L668.7 475.4M686.0 456.4L698.0 479.8M716.4 462.0L744.6 458.9M716.4 462.0L698.0 479.8M716.4 462.0L721.4 480.3M744.6 458.9L768.2 450.7M744.6 458.9L721.4 480.3M744.6 458.9L753.1 476.8M768.2 450.7L799.7 450.1M768.2 450.7L753.1 476.8M768.2 450.7L783.6 465.2M799.7 450.1L819.8 433.2M799.7 450.1L783.6 465.2M799.7 450.1L810.9 461.0M799.7 450.1L828.5 451.2M819.8 433.2L844.2 429.0M819.8 433.2L828.5 451.2M819.8 433.2L850.0 440.9M844.2 429.0L855.4 411.9M844.2 429.0L850.0 440.9M844.2 429.0L874.0 429.5M855.4 411.9L857.0 391.5M855.4 411.9L874.0 429.5M855.4 411.9L890.2 411.5M857.0 391.5L865.8 375.5M857.0 391.5L890.2 411.5M857.0 391.5L902.7 398.8M857.0 391.5L900.0 376.5M865.8 375.5L857.4 357.5M865.8 375.5L900.0 376.5M865.8 375.5L893.6 362.3M857.4 357.5L845.2 343.3M857.4 357.5L893.6 362.3M857.4 357.5L879.0 340.3M845.2 343.3L826.3 333.7M845.2 343.3L879.0 340.3M845.2 343.3L864.2 326.9M826.3 333.7L811.1 315.2M826.3 333.7L864.2 326.9M826.3 333.7L838.8 313.3M811.1 315.2L781.2 307.3M811.1 315.2L838.8 313.3M811.1 315.2L829.9 306.1M811.1 315.2L804.9 295.7M781.2 307.3L804.9 295.7M781.2 307.3L766.5 296.8M741.8 284.8L711.0 278.8M741.8 284.8L766.5 296.8M741.8 284.8L770.3 269.0M741.8 284.8L745.3 264.4M741.8 284.8L719.0 261.6M711.0 278.8L679.0 282.3M711.0 278.8L719.0 261.6M711.0 278.8L692.1 261.4M679.0 282.3L645.2 285.3M679.0 282.3L692.1 261.4M679.0 282.3L665.3 263.8M645.2 285.3L624.8 294.7M645.2 285.3L665.3 263.8M645.2 285.3L640.1 269.7M645.2 285.3L616.6 277.4M624.8 294.7L600.5 311.7M624.8 294.7L616.6 277.4M624.8 294.7L594.4 286.1M600.5 311.7L575.1 317.7M600.5 311.7L594.4 286.1M600.5 311.7L574.1 296.3M575.1 317.7L557.5 334.9M575.1 317.7L574.1 296.3M575.1 317.7L555.7 307.8M575.1 317.7L540.0 320.6M557.5 334.9L544.8 351.4M557.5 334.9L540.0 320.6M557.5 334.9L527.8 334.7M544.8 351.4L544.5 371.2M544.8 351.4L527.8 334.7M544.8 351.4L519.0 349.7M544.8 351.4L513.7 365.2M544.5 371.2L548.0 387.0M544.5 371.2L513.7 365.2M544.5 371.2L511.9 381.0M548.0 387.0L545.5 405.6M548.0 387.0L511.9 381.0M548.0 387.0L513.9 396.8M545.5 405.6L551.8 425.8M545.5 405.6L513.9 396.8M545.5 405.6L519.7 412.2M545.5 405.6L529.0 427.0M551.8 425.8L571.8 429.9M551.8 425.8L529.0 427.0M551.8 425.8L540.9 441.1M571.8 429.9L585.3 448.5M571.8 429.9L540.9 441.1M571.8 429.9L556.7 453.8M585.3 448.5L619.0 460.0M585.3 448.5L556.7 453.8M585.3 448.5L575.2 465.1M619.0 460.0L637.6 460.5M619.0 460.0L575.2 465.1M619.0 460.0L597.0 474.0M619.0 460.0L619.8 481.4M637.6 460.5L668.7 475.4M637.6 460.5L619.8 481.4M637.6 460.5L642.6 488.8M668.7 475.4L698.0 479.8M668.7 475.4L642.6 488.8M668.7 475.4L667.0 494.5M698.0 479.8L721.4 480.3M698.0 479.8L667.0 494.5M698.0 479.8L692.3 499.6M698.0 479.8L719.0 502.5M721.4 480.3L753.1 476.8M721.4 480.3L719.0 502.5M721.4 480.3L745.4 498.3M753.1 476.8L783.6 465.2M753.1 476.8L745.4 498.3M753.1 476.8L770.0 492.3M783.6 465.2L810.9 461.0M783.6 465.2L770.0 492.3M783.6 465.2L793.9 486.7M783.6 465.2L816.2 479.4M810.9 461.0L828.5 451.2M810.9 461.0L816.2 479.4M810.9 461.0L837.6 471.3M828.5 451.2L850.0 440.9M828.5 451.2L837.6 471.3M828.5 451.2L858.4 462.5M850.0 440.9L874.0 429.5M850.0 440.9L858.4 462.5M850.0 440.9L878.1 452.4M874.0 429.5L890.2 411.5M874.0 429.5L878.1 452.4M874.0 429.5L895.6 440.6M874.0 429.5L908.5 426.9M890.2 411.5L902.7 398.8M890.2 411.5L908.5 426.9M890.2 411.5L918.9 412.3M902.7 398.8L900.0 376.5M902.7 398.8L918.9 412.3M902.7 398.8L923.6 396.7M902.7 398.8L925.5 381.0M900.0 376.5L893.6 362.3M900.0 376.5L925.5 381.0M900.0 376.5L924.4 365.2M893.6 362.3L879.0 340.3M893.6 362.3L924.4 365.2M893.6 362.3L920.1 349.5M879.0 340.3L864.2 326.9M879.0 340.3L920.1 349.5M879.0 340.3L910.7 334.6M879.0 340.3L895.8 321.3M864.2 326.9L838.8 313.3M864.2 326.9L895.8 321.3M864.2 326.9L877.8 309.8M838.8 313.3L829.9 306.1M838.8 313.3L859.2 299.0M838.8 313.3L877.8 309.8M829.9 306.1L804.9 295.7M829.9 306.1L859.2 299.0M829.9 306.1L841.7 287.5M804.9 295.7L766.5 296.8M804.9 295.7L841.7 287.5M804.9 295.7L821.4 277.3M804.9 295.7L796.2 272.0M766.5 296.8L796.2 272.0M766.5 296.8L770.3 269.0" stroke="#c00000" stroke-width="1" fill="none" shape-rendering="crispEdges"/><path d="M719.3 367.8L734.2 363.2M719.3 367.8L709.3 360.4M719.3 367.8L693.5 361.1M719.3 367.8L706.8 375.2M719.3 367.8L728.8 376.1M719.3 367.8L749.4 375.0M734.2 363.2L709.3 360.4M734.2 363.2L749.4 375.0M734.2 363.2L751.6 348.9M734.2 363.2L716.1 342.9M734.2 363.2L775.6 360.1M709.3 360.4L693.5 361.1M709.3 360.4L716.1 342.9M709.3 360.4L694.1 349.1M709.3 360.4L678.3 355.4M693.5 361.1L706.8 375.2M693.5 361.1L678.3 355.4M693.5 361.1L670.2 360.2M693.5 361.1L674.7 376.0M706.8 375.2L728.8 376.1M706.8 375.2L674.7 376.0M706.8 375.2L689.7 389.2M706.8 375.2L717.3 388.6M728.8 376.1L749.4 375.0M728.8 376.1L717.3 388.6M728.8 376.1L747.0 390.6M728.8 376.1L762.1 381.7M749.4 375.0L762.1 381.7M749.4 375.0L771.8 377.5M749.4 375.0L775.6 360.1M751.6 348.9L716.1 342.9M751.6 348.9L775.6 360.1M751.6 348.9L751.7 329.2M751.6 348.9L787.2 342.5M716.1 342.9L694.1 349.1M716.1 342.9L751.7 329.2M716.1 342.9L726.4 327.4M716.1 342.9L695.3 325.3M694.1 349.1L678.3 355.4M694.1 349.1L695.3 325.3M694.1 349.1L671.0 336.1M678.3 355.4L670.2 360.2M678.3 355.4L671.0 336.1M678.3 355.4L646.0 338.6M678.3 355.4L631.1 349.6M670.2 360.2L674.7 376.0M670.2 360.2L631.1 349.6M670.2 360.2L636.2 371.3M674.7 376.0L689.7 389.2M674.7 376.0L636.2 371.3M674.7 376.0L634.8 381.6M674.7 376.0L659.7 398.7M689.7 389.2L717.3 388.6M689.7 389.2L659.7 398.7M689.7 389.2L686.4 407.0M717.3 388.6L747.0 390.6M717.3 388.6L686.4 407.0M717.3 388.6L714.5 413.5M747.0 390.6L762.1 381.7M747.0 390.6L714.5 413.5M747.0 390.6L739.6 415.3M747.0 390.6L765.8 404.8M747.0 390.6L786.6 396.5M762.1 381.7L771.8 377.5M762.1 381.7L786.6 396.5M762.1 381.7L800.6 386.3M771.8 377.5L775.6 360.1M771.8 377.5L800.6 386.3M771.8 377.5L809.9 366.4M775.6 360.1L809.9 366.4M775.6 360.1L794.8 356.4M775.6 360.1L787.2 342.5M751.7 329.2L726.4 327.4M751.7 329.2L787.2 342.5M751.7 329.2L756.0 312.7M751.7 329.2L785.6 315.6M726.4 327.4L695.3 325.3M726.4 327.4L756.0 312.7M726.4 327.4L724.4 303.6M726.4 327.4L698.3 307.6M695.3 325.3L671.0 336.1M695.3 325.3L698.3 307.6M695.3 325.3L662.1 314.8M671.0 336.1L646.0 338.6M671.0 336.1L662.1 314.8M671.0 336.1L644.4 322.1M646.0 338.6L631.1 349.6M646.0 338.6L644.4 322.1M646.0 338.6L620.3 332.6M646.0 338.6L611.0 340.9M631.1 349.6L636.2 371.3M631.1 349.6L611.0 340.9M631.1 349.6L602.4 358.1M636.2 371.3L634.8 381.6M636.2 371.3L602.4 358.1M636.2 371.3L599.2 379.7M634.8 381.6L659.7 398.7M634.8 381.6L599.2 379.7M634.8 381.6L615.4 395.1M659.7 398.7L686.4 407.0M659.7 398.7L615.4 395.1M659.7 398.7L635.7 409.1M659.7 398.7L657.8 418.7M686.4 407.0L714.5 413.5M686.4 407.0L657.8 418.7M686.4 407.0L685.2 423.0M686.4 407.0L703.1 425.7M714.5 413.5L739.6 415.3M714.5 413.5L703.1 425.7M714.5 413.5L736.8 429.7M739.6 415.3L765.8 404.8M739.6 415.3L736.8 429.7M739.6 415.3L776.3 421.3M765.8 404.8L786.6 396.5M765.8 404.8L776.3 421.3M765.8 404.8L787.7 414.1M786.6 396.5L800.6 386.3M786.6 396.5L787.7 414.1M786.6 396.5L816.7 404.1M786.6 396.5L828.2 394.1M800.6 386.3L809.9 366.4M800.6 386.3L828.2 394.1M800.6 386.3L839.0 376.1M809.9 366.4L794.8 356.4M809.9 366.4L839.0 376.1M809.9 366.4L830.2 360.6M794.8 356.4L787.2 342.5M794.8 356.4L830.2 360.6M794.8 356.4L827.4 345.3M787.2 342.5L827.4 345.3M787.2 342.5L808.4 331.2M787.2 342.5L785.6 315.6M756.0 312.7L724.4 303.6M756.0 312.7L785.6 315.6M756.0 312.7L753.5 292.6M756.0 312.7L781.2 295.3M724.4 303.6L698.3 307.6M724.4 303.6L753.5 292.6M724.4 303.6L730.4 289.5M724.4 303.6L690.2 291.6M698.3 307.6L662.1 314.8M698.3 307.6L690.2 291.6M698.3 307.6L661.9 299.9M662.1 314.8L644.4 322.1M662.1 314.8L661.9 299.9M662.1 314.8L637.0 307.2M644.4 322.1L620.3 332.6M644.4 322.1L637.0 307.2M644.4 322.1L612.3 316.1M620.3 332.6L611.0 340.9M620.3 332.6L612.3 316.1M620.3 332.6L596.0 322.7M611.0 340.9L602.4 358.1M611.0 340.9L596.0 322.7M611.0 340.9L572.6 341.0M611.0 340.9L573.4 354.8M602.4 358.1L599.2 379.7M602.4 358.1L573.4 354.8M602.4 358.1L572.6 370.8M599.2 379.7L615.4 395.1M599.2 379.7L572.6 370.8M599.2 379.7L572.9 390.6M615.4 395.1L635.7 409.1M615.4 395.1L572.9 390.6M615.4 395.1L589.3 405.1M615.4 395.1L607.5 417.3M635.7 409.1L657.8 418.7M635.7 409.1L607.5 417.3M635.7 409.1L628.9 434.2M657.8 418.7L685.2 423.0M657.8 418.7L628.9 434.2M657.8 418.7L657.1 442.4M685.2 423.0L703.1 425.7M685.2 423.0L657.1 442.4M685.2 423.0L686.0 444.4M703.1 425.7L736.8 429.7M703.1 425.7L686.0 444.4M703.1 425.7L716.4 450.0M736.8 429.7L776.3 421.3M736.8 429.7L716.4 450.0M736.8 429.7L744.6 446.9M736.8 429.7L768.2 438.7M776.3 421.3L787.7 414.1M776.3 421.3L768.2 438.7M776.3 421.3L799.7 438.1M787.7 414.1L816.7 404.1M787.7 414.1L799.7 438.1M787.7 414.1L819.8 421.2M816.7 404.1L828.2 394.1M816.7 404.1L819.8 421.2M816.7 404.1L844.2 417.0M816.7 404.1L855.4 399.9M828.2 394.1L839.0 376.1M828.2 394.1L855.4 399.9M828.2 394.1L857.0 379.5M839.0 376.1L830.2 360.6M839.0 376.1L857.0 379.5M839.0 376.1L865.8 363.5M830.2 360.6L827.4 345.3M830.2 360.6L865.8 363.5M830.2 360.6L857.4 345.5M827.4 345.3L808.4 331.2M827.4 345.3L857.4 345.5M827.4 345.3L845.2 331.3M808.4 331.2L785.6 315.6M808.4 331.2L845.2 331.3M808.4 331.2L826.3 321.7M785.6 315.6L826.3 321.7M785.6 315.6L811.1 303.2M785.6 315.6L781.2 295.3M753.5 292.6L730.4 289.5M753.5 292.6L781.2 295.3M753.5 292.6L741.8 272.8M753.5 292.6L766.5 284.8M730.4 289.5L690.2 291.6M730.4 289.5L741.8 272.8M730.4 289.5L711.0 266.8M690.2 291.6L661.9 299.9M690.2 291.6L711.0 266.8M690.2 291.6L679.0 270.3M661.9 299.9L637.0 307.2M661.9 299.9L679.0 270.3M661.9 299.9L645.2 273.3M661.9 299.9L624.8 282.7M637.0 307.2L612.3 316.1M637.0 307.2L624.8 282.7M637.0 307.2L600.5 299.7M612.3 316.1L596.0 322.7M612.3 316.1L600.5 299.7M612.3 316.1L575.1 305.7M596.0 322.7L572.6 341.0M596.0 322.7L575.1 305.7M596.0 322.7L557.5 322.9M572.6 341.0L573.4 354.8M572.6 341.0L557.5 322.9M572.6 341.0L544.8 339.4M572.6 341.0L544.5 359.2M573.4 354.8L572.6 370.8M573.4 354.8L544.5 359.2M572.6 370.8L572.9 390.6M572.6 370.8L544.5 359.2M572.6 370.8L548.0 375.0M572.9 390.6L589.3 405.1M572.9 390.6L548.0 375.0M572.9 390.6L545.5 393.6M572.9 390.6L551.8 413.8M589.3 405.1L607.5 417.3M589.3 405.1L551.8 413.8M589.3 405.1L571.8 417.9M607.5 417.3L628.9 434.2M607.5 417.3L571.8 417.9M607.5 417.3L585.3 436.5M628.9 434.2L657.1 442.4M628.9 434.2L585.3 436.5M628.9 434.2L619.0 448.0M628.9 434.2L637.6 448.5M657.1 442.4L686.0 444.4M657.1 442.4L637.6 448.5M657.1 442.4L668.7 463.4M686.0 444.4L716.4 450.0M686.0 444.4L668.7 463.4M686.0 444.4L698.0 467.8M716.4 450.0L744.6 446.9M716.4 450.0L698.0 467.8M716.4 450.0L721.4 468.3M744.6 446.9L768.2 438.7M744.6 446.9L721.4 468.3M744.6 446.9L753.1 464.8M768.2 438.7L799.7 438.1M768.2 438.7L753.1 464.8M768.2 438.7L783.6 453.2M799.7 438.1L819.8 421.2M799.7 438.1L783.6 453.2M799.7 438.1L810.9 449.0M799.7 438.1L828.5 439.2M819.8 421.2L844.2 417.0M819.8 421.2L828.5 439.2M819.8 421.2L850.0 428.9M844.2 417.0L855.4 399.9M844.2 417.0L850.0 428.9M844.2 417.0L874.0 417.5M855.4 399.9L857.0 379.5M855.4 399.9L874.0 417.5M855.4 399.9L890.2 399.5M857.0 379.5L865.8 363.5M857.0 379.5L890.2 399.5M857.0 379.5L902.7 386.8M857.0 379.5L900.0 364.5M865.8 363.5L857.4 345.5M865.8 363.5L900.0 364.5M865.8 363.5L893.6 350.3M857.4 345.5L845.2 331.3M857.4 345.5L893.6 350.3M857.4 345.5L879.0 328.3M845.2 331.3L826.3 321.7M845.2 331.3L879.0 328.3M845.2 331.3L864.2 314.9M826.3 321.7L811.1 303.2M826.3 321.7L864.2 314.9M826.3 321.7L838.8 301.3M811.1 303.2L781.2 295.3M811.1 303.2L838.8 301.3M811.1 303.2L829.9 294.1M811.1 303.2L804.9 283.7M781.2 295.3L804.9 283.7M781.2 295.3L766.5 284.8M741.8 272.8L711.0 266.8M741.8 272.8L766.5 284.8M741.8 272.8L770.3 257.0M741.8 272.8L745.3 252.4M741.8 272.8L719.0 249.6M711.0 266.8L679.0 270.3M711.0 266.8L719.0 249.6M711.0 266.8L692.1 249.4M679.0 270.3L645.2 273.3M679.0 270.3L692.1 249.4M679.0 270.3L665.3 251.8M645.2 273.3L624.8 282.7M645.2 273.3L665.3 251.8M645.2 273.3L640.1 257.7M645.2 273.3L616.6 265.4M624.8 282.7L600.5 299.7M624.8 282.7L616.6 265.4M624.8 282.7L594.4 274.1M600.5 299.7L575.1 305.7M600.5 299.7L594.4 274.1M600.5 299.7L574.1 284.3M575.1 305.7L557.5 322.9M575.1 305.7L574.1 284.3M575.1 305.7L555.7 295.8M575.1 305.7L540.0 308.6M557.5 322.9L544.8 339.4M557.5 322.9L540.0 308.6M557.5 322.9L527.8 322.7M544.8 339.4L544.5 359.2M544.8 339.4L527.8 322.7M544.8 339.4L519.0 337.7M544.8 339.4L513.7 353.2M544.5 359.2L548.0 375.0M544.5 359.2L513.7 353.2M544.5 359.2L511.9 369.0M548.0 375.0L545.5 393.6M548.0 375.0L511.9 369.0M548.0 375.0L513.9 384.8M545.5 393.6L551.8 413.8M545.5 393.6L513.9 384.8M545.5 393.6L519.7 400.2M545.5 393.6L529.0 415.0M551.8 413.8L571.8 417.9M551.8 413.8L529.0 415.0M551.8 413.8L540.9 429.1M571.8 417.9L585.3 436.5M571.8 417.9L540.9 429.1M571.8 417.9L556.7 441.8M585.3 436.5L619.0 448.0M585.3 436.5L556.7 441.8M585.3 436.5L575.2 453.1M619.0 448.0L637.6 448.5M619.0 448.0L575.2 453.1M619.0 448.0L597.0 462.0M619.0 448.0L619.8 469.4M637.6 448.5L668.7 463.4M637.6 448.5L619.8 469.4M637.6 448.5L642.6 476.8M668.7 463.4L698.0 467.8M668.7 463.4L642.6 476.8M668.7 463.4L667.0 482.5M698.0 467.8L721.4 468.3M698.0 467.8L667.0 482.5M698.0 467.8L692.3 487.6M698.0 467.8L719.0 490.5M721.4 468.3L753.1 464.8M721.4 468.3L719.0 490.5M721.4 468.3L745.4 486.3M753.1 464.8L783.6 453.2M753.1 464.8L745.4 486.3M753.1 464.8L770.0 480.3M783.6 453.2L810.9 449.0M783.6 453.2L770.0 480.3M783.6 453.2L793.9 474.7M783.6 453.2L816.2 467.4M810.9 449.0L828.5 439.2M810.9 449.0L816.2 467.4M810.9 449.0L837.6 459.3M828.5 439.2L850.0 428.9M828.5 439.2L837.6 459.3M828.5 439.2L858.4 450.5M850.0 428.9L874.0 417.5M850.0 428.9L858.4 450.5M850.0 428.9L878.1 440.4M874.0 417.5L890.2 399.5M874.0 417.5L878.1 440.4M874.0 417.5L895.6 428.6M874.0 417.5L908.5 414.9M890.2 399.5L902.7 386.8M890.2 399.5L908.5 414.9M890.2 399.5L918.9 400.3M902.7 386.8L900.0 364.5M902.7 386.8L918.9 400.3M902.7 386.8L923.6 384.7M902.7 386.8L925.5 369.0M900.0 364.5L893.6 350.3M900.0 364.5L925.5 369.0M900.0 364.5L924.4 353.2M893.6 350.3L879.0 328.3M893.6 350.3L924.4 353.2M893.6 350.3L920.1 337.5M879.0 328.3L864.2 314.9M879.0 328.3L920.1 337.5M879.0 328.3L910.7 322.6M879.0 328.3L895.8 309.3M864.2 314.9L838.8 301.3M864.2 314.9L895.8 309.3M864.2 314.9L877.8 297.8M838.8 301.3L829.9 294.1M838.8 301.3L859.2 287.0M838.8 301.3L877.8 297.8M829.9 294.1L804.9 283.7M829.9 294.1L859.2 287.0M829.9 294.1L841.7 275.5M804.9 283.7L766.5 284.8M804.9 283.7L841.7 275.5M804.9 283.7L821.4 265.3M804.9 283.7L796.2 260.0M766.5 284.8L796.2 260.0M766.5 284.8L770.3 257.0M859.2 287.0L841.7 275.5M859.2 287.0L877.8 297.8M841.7 275.5L821.4 265.3M821.4 265.3L796.2 260.0M796.2 260.0L770.3 257.0M770.3 257.0L745.3 252.4M745.3 252.4L719.0 249.6M719.0 249.6L692.1 249.4M692.1 249.4L665.3 251.8M665.3 251.8L640.1 257.7M640.1 257.7L616.6 265.4M616.6 265.4L594.4 274.1M594.4 274.1L574.1 284.3M574.1 284.3L555.7 295.8M555.7 295.8L540.0 308.6M540.0 308.6L527.8 322.7M527.8 322.7L519.0 337.7M519.0 337.7L513.7 353.2M513.7 353.2L511.9 369.0M511.9 369.0L513.9 384.8M513.9 384.8L519.7 400.2M519.7 400.2L529.0 415.0M529.0 415.0L540.9 429.1M540.9 429.1L556.7 441.8M556.7 441.8L575.2 453.1M575.2 453.1L597.0 462.0M597.0 462.0L619.8 469.4M619.8 469.4L642.6 476.8M642.6 476.8L667.0 482.5M667.0 482.5L692.3 487.6M692.3 487.6L719.0 490.5M719.0 490.5L745.4 486.3M745.4 486.3L770.0 480.3M770.0 480.3L793.9 474.7M793.9 474.7L816.2 467.4M816.2 467.4L837.6 459.3M837.6 459.3L858.4 450.5M858.4 450.5L878.1 440.4M878.1 440.4L895.6 428.6M895.6 428.6L908.5 414.9M908.5 414.9L918.9 400.3M918.9 400.3L923.6 384.7M923.6 384.7L925.5 369.0M925.5 369.0L924.4 353.2M924.4 353.2L920.1 337.5M920.1 337.5L910.7 322.6M910.7 322.6L895.8 309.3M895.8 309.3L877.8 297.8" stroke="#000" stroke-width="2.9" stroke-linecap="round" fill="none" shape-rendering="crispEdges"/></svg>
<div style="left:393px;top:681px;width:184px;height:20px;background:#000"></div>
<span style="left:473.27px;top:679.90px;line-height:15px;font:11px 'Liberation Sans',sans-serif;line-height:15px;transform:scaleX(0.9242);transform-origin:50% 50%;color:#fff;white-space:pre">2mm</span>
<div style="left:393px;top:702px;width:668px;height:14px;background:#e6e6e6"></div>
<div class="sbtn" style="left:393px;top:702px;width:14px;height:14px"><b class="lf sm"></b></div>
<div class="sbtn" style="left:1047px;top:702px;width:14px;height:14px"><b class="rt sm"></b></div>
<div class="sbtn" style="left:796px;top:702px;width:17px;height:14px"></div>
<div style="left:1062px;top:46px;width:15px;height:655px;background:#e6e6e6;border-left:1px solid #808080;box-sizing:border-box"></div>
<div class="sbtn" style="left:1062px;top:46px;width:15px;height:15px"><b class="up"></b></div>
<div class="sbtn" style="left:1062px;top:686px;width:15px;height:15px"><b class="dn"></b></div>
<div class="sbtn" style="left:1062px;top:466px;width:15px;height:36px"></div>
<div style="left:1077px;top:46px;width:15px;height:655px;background:#e6e6e6;border-left:1px solid #808080;border-right:1px solid #808080;box-sizing:border-box"></div>
<div class="sbtn" style="left:1077px;top:46px;width:15px;height:15px"><b class="up"></b></div>
<div class="sbtn" style="left:1077px;top:686px;width:15px;height:15px"><b class="dn"></b></div>
<div class="sbtn" style="left:1077px;top:356px;width:15px;height:36px"></div>
<div style="left:1062px;top:702px;width:16px;height:15px;background:#fff;border:2px solid #000;border-width:1px 1px 2px 2px"></div>
<div style="left:1077px;top:702px;width:16px;height:15px;background:#fff;border:2px solid #000;border-width:1px 2px 2px 2px"></div>
<div style="left:1094px;top:46px;width:64px;height:15px;background:#fff"></div>
<div style="left:1094px;top:60px;width:64px;height:60px;overflow:hidden"><span style="position:absolute;right:-1.5px;top:3px;font:11px 'Liberation Sans',sans-serif;transform:scaleX(.83);transform-origin:100% 0;white-space:pre">az:-45.00</span><span style="position:absolute;right:-1.5px;top:20px;font:11px 'Liberation Sans',sans-serif;transform:scaleX(.83);transform-origin:100% 0;white-space:pre">el:33.75</span><span style="position:absolute;right:-1.5px;top:37px;font:11px 'Liberation Sans',sans-serif;transform:scaleX(.83);transform-origin:100% 0;white-space:pre">ro:0.00</span></div>
<span style="left:393.90px;top:714.50px;line-height:15px;font:bold 11px 'Liberation Sans',sans-serif;line-height:15px;transform:scaleX(0.8595);transform-origin:0 50%;color:#000;white-space:pre">WILDTYPE  396 FEs. Step 161 of 155 (0.26 sec, 0.65 ms/FE, 32 iters), 1.610 s.</span>
<span style="left:393.90px;top:729.60px;line-height:15px;font:bold 11px 'Liberation Sans',sans-serif;line-height:15px;transform:scaleX(0.8638);transform-origin:0 50%;color:#000;white-space:pre">Growth: area 5.03 (+1.0%), linear 2.24 (+0.5%). Strain max 0.03% average -0.00%. Av. strain retention 0%.</span>
</body></html>
